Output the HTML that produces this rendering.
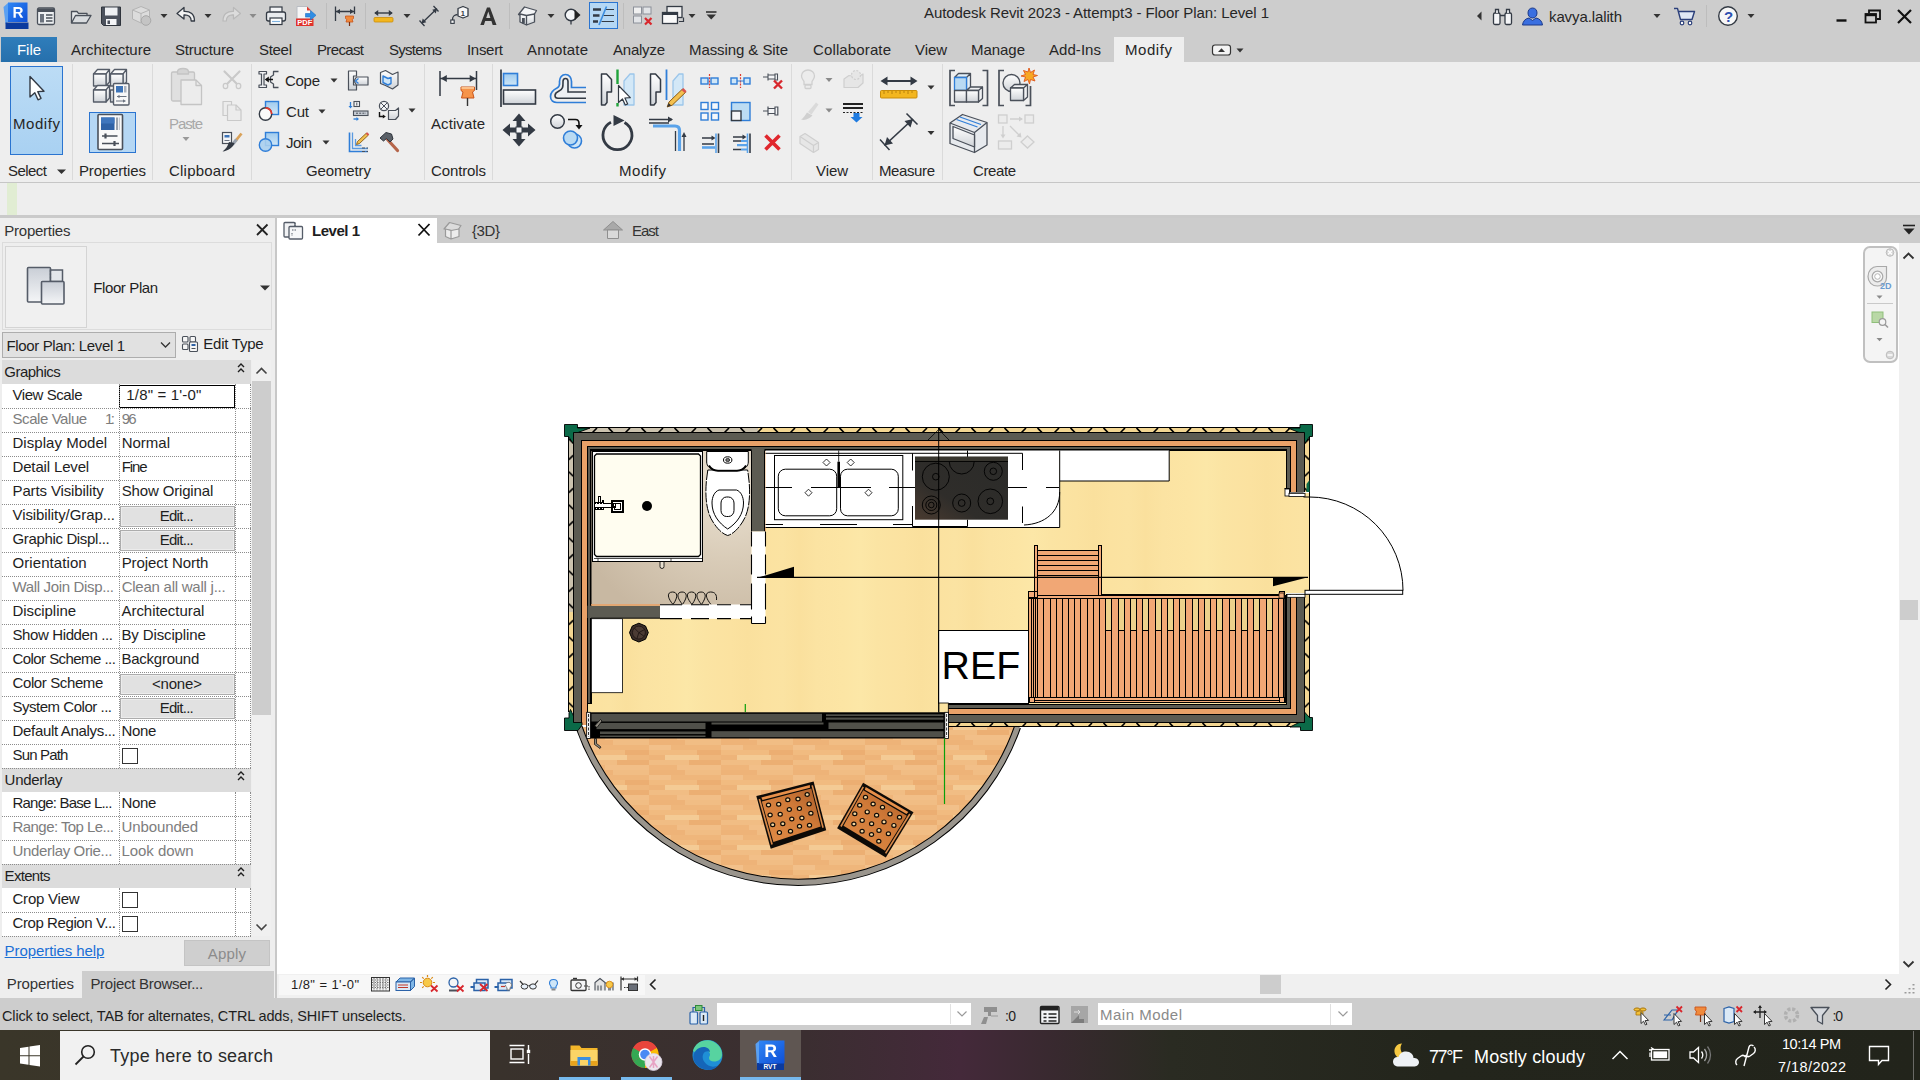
<!DOCTYPE html>
<html><head><meta charset="utf-8"><title>Autodesk Revit 2023</title>
<style>
html,body{margin:0;padding:0;}
body{width:1920px;height:1080px;overflow:hidden;position:relative;background:#fff;font-family:"Liberation Sans",sans-serif;}
.a{position:absolute;box-sizing:border-box;}
.t{position:absolute;white-space:nowrap;line-height:1;font-family:"Liberation Sans",sans-serif;}
svg{position:absolute;left:0;top:0;overflow:visible;}

</style></head>
<body>
<!-- ===== title bar + ribbon tabs ===== -->
<div class="a" style="left:0;top:0;width:1920px;height:62px;background:#cdcdcd"></div>
<div class="a" style="left:1px;top:37px;width:56px;height:25px;background:linear-gradient(#2f7dbb,#2670ac)"></div>
<div class="a" style="left:1114px;top:37px;width:70px;height:26px;background:#eeeeee"></div>
<!-- ===== ribbon body ===== -->
<div class="a" style="left:0;top:62px;width:1920px;height:121px;background:#eeeeee"></div>
<div class="a" style="left:0;top:182px;width:1920px;height:1px;background:#c6c6c6"></div>
<!-- panel separators -->
<div class="a" style="left:72px;top:64px;width:1px;height:116px;background:#dadada"></div>
<div class="a" style="left:152px;top:64px;width:1px;height:116px;background:#dadada"></div>
<div class="a" style="left:251px;top:64px;width:1px;height:116px;background:#dadada"></div>
<div class="a" style="left:424px;top:64px;width:1px;height:116px;background:#dadada"></div>
<div class="a" style="left:492px;top:64px;width:1px;height:116px;background:#dadada"></div>
<div class="a" style="left:791px;top:64px;width:1px;height:116px;background:#dadada"></div>
<div class="a" style="left:872px;top:64px;width:1px;height:116px;background:#dadada"></div>
<div class="a" style="left:942px;top:64px;width:1px;height:116px;background:#dadada"></div>
<!-- Modify big button + properties button -->
<div class="a" style="left:10px;top:66px;width:53px;height:89px;background:linear-gradient(#bcdcf5,#a9d1f2);border:1px solid #2a74d0"></div>
<div class="a" style="left:89px;top:112px;width:47px;height:41px;background:#b5d7f4;border:1px solid #2a74d0"></div>
<!-- QAT active toggle -->
<div class="a" style="left:589px;top:2px;width:29px;height:27px;background:#b5d7f4;border:1px solid #2a74d0"></div>
<!-- ===== options bar ===== -->
<div class="a" style="left:0;top:183px;width:1920px;height:33px;background:#eeeeee"></div>
<div class="a" style="left:7px;top:183px;width:10px;height:32px;background:#e1edd3"></div>
<div class="a" style="left:0;top:215px;width:1920px;height:3px;background:#cacaca"></div>
<!-- ===== properties palette ===== -->
<div class="a" style="left:0;top:218px;width:275px;height:780px;background:#eeeeee"></div>
<div class="a" style="left:275px;top:218px;width:2px;height:780px;background:#c8c8c8"></div>
<div class="a" style="left:2px;top:242px;width:270px;height:88px;border:1px solid #dcdcdc;background:#eeeeee"></div>
<div class="a" style="left:5px;top:246px;width:82px;height:82px;border:1px solid #d4d4d4;background:#f0f0f0"></div>
<div class="a" style="left:2px;top:332px;width:174px;height:26px;border:1px solid #adadad;background:#e1e1e1"></div>
<!-- table -->
<div class="a" style="left:2px;top:360px;width:249px;height:576px;background:#fff"></div>
<div class="a" style="left:2px;top:360px;width:249px;height:24px;background:#dcdcdc"></div>
<div class="a" style="left:2px;top:768px;width:249px;height:24px;background:#dcdcdc"></div>
<div class="a" style="left:2px;top:864px;width:249px;height:24px;background:#dcdcdc"></div>
<!-- scrollbar -->
<div class="a" style="left:252px;top:360px;width:19px;height:576px;background:#f0f0f0"></div>
<div class="a" style="left:252px;top:381px;width:19px;height:334px;background:#cdcdcd"></div>
<!-- apply -->
<div class="a" style="left:184px;top:940px;width:86px;height:26px;background:#cfcfcf;border:1px solid #c4c4c4"></div>
<!-- bottom tabs -->
<div class="a" style="left:0;top:971px;width:274px;height:27px;background:#cdcdcd"></div>
<div class="a" style="left:0;top:971px;width:82px;height:27px;background:#eeeeee"></div>
<!-- ===== view tabs ===== -->
<div class="a" style="left:277px;top:218px;width:1643px;height:25px;background:#cccccc"></div>
<div class="a" style="left:277px;top:218px;width:160px;height:25px;background:#ffffff"></div>
<!-- canvas right scrollbar -->
<div class="a" style="left:1899px;top:243px;width:21px;height:731px;background:#f0f0f0"></div>
<div class="a" style="left:1900px;top:600px;width:18px;height:20px;background:#cdcdcd"></div>
<!-- nav bar -->
<div class="a" style="left:1862.500px;top:245.500px;width:35.500px;height:117px;border:2px solid #c0c0c0;border-radius:7px;background:#f4f4f4"></div>
<!-- view control bar / h scrollbar -->
<div class="a" style="left:277px;top:974px;width:1643px;height:24px;background:#f0f0f0"></div>
<div class="a" style="left:279px;top:975px;width:366px;height:20px;background:#f7f7f7"></div>
<div class="a" style="left:1260px;top:975px;width:21px;height:19px;background:#cdcdcd"></div>
<!-- ===== status bar ===== -->
<div class="a" style="left:0;top:998px;width:1920px;height:33px;background:#cdcdcd"></div>
<div class="a" style="left:717px;top:1003px;width:254px;height:22px;background:#fff"></div>
<div class="a" style="left:1098px;top:1003px;width:254px;height:22px;background:#fff"></div>
<!-- ===== taskbar ===== -->
<div class="a" style="left:0;top:1030px;width:1920px;height:50px;background:linear-gradient(90deg,#3a3629 0%,#39322c 26%,#3b2e31 42%,#44293a 50%,#38292f 55%,#2a2b22 61%,#23251c 75%,#22241b 100%)"></div>
<div class="a" style="left:60px;top:1031px;width:430px;height:49px;background:#f1f1f1"></div>
<div class="a" style="left:740px;top:1030px;width:61px;height:50px;background:#5f5652"></div>
<div class="a" style="left:1913px;top:1031px;width:1px;height:49px;background:#6a6a66"></div>
<div class="a" style="left:559px;top:1077px;width:51px;height:3px;background:#76b9ed"></div>
<div class="a" style="left:621px;top:1077px;width:51px;height:3px;background:#76b9ed"></div>
<div class="a" style="left:740px;top:1077px;width:61px;height:3px;background:#76b9ed"></div>

<!-- properties rows -->
<svg width="1920" height="1080"><path d="M238 367.0l3-3 3 3M238 372.0l3-3 3 3" stroke="#1e1e1e" stroke-width="1.4" fill="none"/></svg>
<div class="a" style="left:119px;top:384.5px;width:116px;height:23px;border:1.5px solid #000;background:#fff"></div>
<div class="a" style="left:2px;top:407.5px;width:249px;height:0;border-top:1px dotted #8c8c8c"></div>
<div class="a" style="left:2px;top:431.5px;width:249px;height:0;border-top:1px dotted #8c8c8c"></div>
<div class="a" style="left:2px;top:455.5px;width:249px;height:0;border-top:1px dotted #8c8c8c"></div>
<div class="a" style="left:2px;top:479.5px;width:249px;height:0;border-top:1px dotted #8c8c8c"></div>
<div class="a" style="left:2px;top:503.5px;width:249px;height:0;border-top:1px dotted #8c8c8c"></div>
<div class="a" style="left:120px;top:505.5px;width:115px;height:21.500px;border:1px solid #adadad;background:#e1e1e1;box-shadow:inset 0 0 0 1px #ececec"></div>
<div class="a" style="left:2px;top:527.5px;width:249px;height:0;border-top:1px dotted #8c8c8c"></div>
<div class="a" style="left:120px;top:529.5px;width:115px;height:21.500px;border:1px solid #adadad;background:#e1e1e1;box-shadow:inset 0 0 0 1px #ececec"></div>
<div class="a" style="left:2px;top:551.5px;width:249px;height:0;border-top:1px dotted #8c8c8c"></div>
<div class="a" style="left:2px;top:575.5px;width:249px;height:0;border-top:1px dotted #8c8c8c"></div>
<div class="a" style="left:2px;top:599.5px;width:249px;height:0;border-top:1px dotted #8c8c8c"></div>
<div class="a" style="left:2px;top:623.5px;width:249px;height:0;border-top:1px dotted #8c8c8c"></div>
<div class="a" style="left:2px;top:647.5px;width:249px;height:0;border-top:1px dotted #8c8c8c"></div>
<div class="a" style="left:2px;top:671.5px;width:249px;height:0;border-top:1px dotted #8c8c8c"></div>
<div class="a" style="left:120px;top:673.5px;width:115px;height:21.500px;border:1px solid #adadad;background:#e1e1e1;box-shadow:inset 0 0 0 1px #ececec"></div>
<div class="a" style="left:2px;top:695.5px;width:249px;height:0;border-top:1px dotted #8c8c8c"></div>
<div class="a" style="left:120px;top:697.5px;width:115px;height:21.500px;border:1px solid #adadad;background:#e1e1e1;box-shadow:inset 0 0 0 1px #ececec"></div>
<div class="a" style="left:2px;top:719.5px;width:249px;height:0;border-top:1px dotted #8c8c8c"></div>
<div class="a" style="left:2px;top:743.5px;width:249px;height:0;border-top:1px dotted #8c8c8c"></div>
<div class="a" style="left:122px;top:747.5px;width:16px;height:16px;border:1px solid #333;background:#fff"></div>
<div class="a" style="left:2px;top:767.5px;width:249px;height:0;border-top:1px dotted #8c8c8c"></div>
<svg width="1920" height="1080"><path d="M238 775.0l3-3 3 3M238 780.0l3-3 3 3" stroke="#1e1e1e" stroke-width="1.4" fill="none"/></svg>
<div class="a" style="left:2px;top:815.5px;width:249px;height:0;border-top:1px dotted #8c8c8c"></div>
<div class="a" style="left:2px;top:839.5px;width:249px;height:0;border-top:1px dotted #8c8c8c"></div>
<div class="a" style="left:2px;top:863.5px;width:249px;height:0;border-top:1px dotted #8c8c8c"></div>
<svg width="1920" height="1080"><path d="M238 871.0l3-3 3 3M238 876.0l3-3 3 3" stroke="#1e1e1e" stroke-width="1.4" fill="none"/></svg>
<div class="a" style="left:122px;top:891.5px;width:16px;height:16px;border:1px solid #333;background:#fff"></div>
<div class="a" style="left:2px;top:911.5px;width:249px;height:0;border-top:1px dotted #8c8c8c"></div>
<div class="a" style="left:122px;top:915.5px;width:16px;height:16px;border:1px solid #333;background:#fff"></div>
<div class="a" style="left:2px;top:935.5px;width:249px;height:0;border-top:1px dotted #8c8c8c"></div>
<div class="a" style="left:118.5px;top:384px;width:0;height:384px;border-left:1px dotted #8c8c8c"></div>
<div class="a" style="left:235px;top:384px;width:0;height:384px;border-left:1px dotted #8c8c8c"></div>
<div class="a" style="left:249.600px;top:384px;width:0;height:384px;border-left:1px dotted #8c8c8c"></div>
<div class="a" style="left:118.5px;top:792px;width:0;height:72px;border-left:1px dotted #8c8c8c"></div>
<div class="a" style="left:235px;top:792px;width:0;height:72px;border-left:1px dotted #8c8c8c"></div>
<div class="a" style="left:249.600px;top:792px;width:0;height:72px;border-left:1px dotted #8c8c8c"></div>
<div class="a" style="left:118.5px;top:888px;width:0;height:48px;border-left:1px dotted #8c8c8c"></div>
<div class="a" style="left:235px;top:888px;width:0;height:48px;border-left:1px dotted #8c8c8c"></div>
<div class="a" style="left:249.600px;top:888px;width:0;height:48px;border-left:1px dotted #8c8c8c"></div>

<svg width="1920" height="1080" viewBox="0 0 1920 1080">
<defs>
 <linearGradient id="gGy" x1="0" x2="0" y1="0" y2="1"><stop offset="0" stop-color="#ffffff"/><stop offset="1" stop-color="#cfd3d8"/></linearGradient>
 <linearGradient id="gGy2" x1="0" x2="0" y1="0" y2="1"><stop offset="0" stop-color="#c9ced6"/><stop offset="1" stop-color="#f4f5f7"/></linearGradient>
 <linearGradient id="gBl" x1="0" x2="0" y1="0" y2="1"><stop offset="0" stop-color="#9fcbee"/><stop offset="1" stop-color="#cfe6f7"/></linearGradient>
 <linearGradient id="gRv" x1="0" x2="1" y1="0" y2="1"><stop offset="0" stop-color="#2f86f5"/><stop offset="1" stop-color="#0e4fd6"/></linearGradient>
</defs>
<!-- ================= QAT ================= -->
<!-- Revit logo -->
<path d="M3.500 7L8.500 2.500V21.500L5.500 24Z" fill="#5aa0f2"/>
<path d="M5.500 22.500H28.500V29H5.500Z" fill="#0b3a9e"/>
<path d="M8 2.500H27.500V22H8Z" fill="url(#gRv)"/>
<path d="M13.500 7h5.200c2.600 0 4 1.300 4 3.300c0 1.600-.9 2.600-2.300 3l2.900 4.500h-2.700l-2.500-4.200h-2.300v4.200h-2.300z M15.800 9v3h2.700c1.200 0 1.800-.5 1.800-1.500s-.6-1.500-1.800-1.500z" fill="#fff" fill-rule="evenodd"/>
<!-- start page -->
<rect x="37.500" y="8" width="17" height="16.500" rx="1.500" fill="#eef0f2" stroke="#4a505a" stroke-width="1.300"/>
<rect x="38" y="8.500" width="16" height="3.500" fill="#4a505a"/>
<rect x="40" y="14" width="4" height="8.500" fill="#6b727d"/>
<path d="M46 15h6.500M46 18h6.500M46 21h6.500" stroke="#4a505a" stroke-width="1.300"/>
<!-- open -->
<path d="M71.500 23V11.500h5.500l1.500 1.800h8.500V15.500" fill="#e6e8ea" stroke="#4a505a" stroke-width="1.300" stroke-linejoin="round"/>
<path d="M71.500 23L75.500 15.500H91L86.500 23Z" fill="#d9dcdf" stroke="#4a505a" stroke-width="1.300" stroke-linejoin="round"/>
<!-- save -->
<path d="M101.500 7H120.500V25.500H103.500L101.500 23.500Z" fill="#4b515c" stroke="#2f343c" stroke-width="1"/>
<rect x="105" y="7.500" width="12.500" height="8" fill="#eef0f3"/>
<rect x="106" y="19" width="10.500" height="6" fill="#f4f5f7"/><rect x="107.500" y="20.500" width="2.500" height="3.500" fill="#4b515c"/>
<!-- sync (disabled) -->
<g fill="#dcdcdc" stroke="#b4b4b4" stroke-width="1" stroke-linejoin="round">
 <path d="M141 6.500l8.500 3.500v9l-8.500 4-8.500-4v-9z"/><path d="M132.500 10l8.500 3.500 8.500-3.500M141 13.500V23" fill="none"/>
 <circle cx="146" cy="20.500" r="4.800" fill="#c4c4c4" stroke="#a8a8a8"/>
</g>
<path d="M160.500 14h7l-3.500 4z" fill="#333"/>
<!-- undo -->
<path d="M177 13.500l7-6v3.800c6.500-.3 10.500 3 10.500 9.700h-3.300c0-4.200-2.700-6.400-7.200-6.200V19Z" fill="#f2f2f2" stroke="#333a44" stroke-width="1.300" stroke-linejoin="round"/>
<path d="M204.500 14h7l-3.500 4z" fill="#333"/>
<!-- redo disabled -->
<path d="M240.500 13.500l-7-6v3.800c-6.500-.3-10.500 3-10.500 9.700h3.300c0-4.200 2.700-6.400 7.200-6.200V19Z" fill="#dcdcdc" stroke="#b9b9b9" stroke-width="1.200" stroke-linejoin="round"/>
<path d="M249.500 14h7l-3.500 4z" fill="#8a8a8a"/>
<!-- print -->
<rect x="270" y="7" width="12" height="6" fill="#f4f5f7" stroke="#333a44" stroke-width="1.200"/>
<rect x="266.500" y="12" width="19" height="9" rx="2" fill="#e9ebee" stroke="#333a44" stroke-width="1.300"/>
<rect x="270" y="18" width="12" height="6.500" fill="#fff" stroke="#333a44" stroke-width="1.200"/>
<path d="M272 21.500h8" stroke="#7fb2e0" stroke-width="1.200"/>
<!-- pdf -->
<path d="M297 6.500h10l4 4V19H297Z" fill="#f6f6f6" stroke="#b9bdc3" stroke-width="1"/>
<path d="M307 6.500l4 4h-4z" fill="#e03c31"/>
<rect x="296" y="18.500" width="17.500" height="7.500" fill="#e0322b"/>
<text x="297.300" y="25" font-family="Liberation Sans, sans-serif" font-size="6.800" font-weight="700" fill="#fff" textLength="15" lengthAdjust="spacingAndGlyphs">PDF</text>
<path d="M305.500 13.500h5v-3l5.500 4.800-5.500 4.800v-3h-5z" fill="#2f8de4" stroke="#1b6fc4" stroke-width=".6"/>
<!-- separators -->
<path d="M326.500 3V29M365.500 3V29M509.500 3V29M623.500 3V29" stroke="#bdbdbd" stroke-width="1"/>
<!-- aligned dim + pin -->
<path d="M335.500 6.500V21M354.500 6.500V14M335.500 11.500H354.500" stroke="#333a44" stroke-width="1.300" fill="none"/>
<path d="M336 11.500l4-2.500v5zM354 11.500l-4-2.500v5z" fill="#333a44"/>
<path d="M345.500 16h8v2.500l-1.300 1 .8 2.500h-7l.8-2.500-1.300-1z" fill="#f08a3c" stroke="#c9541a" stroke-width=".8"/><path d="M349.500 22v4" stroke="#7a3010" stroke-width="1.200"/>
<!-- measure -->
<path d="M375 13h17" stroke="#333a44" stroke-width="1.400"/><path d="M374.200 13l4-3v6zM392.800 13l-4-3v6z" fill="#333a44"/>
<rect x="374" y="17.500" width="19" height="4.500" rx="1" fill="#f3b61f" stroke="#c98d0a" stroke-width=".8"/>
<path d="M403.500 14h7l-3.500 4z" fill="#333"/>
<!-- aligned dim diag -->
<path d="M421.500 23.500L437 8.500M419.500 20.500l5 5.500M433.500 6l5 5.500" stroke="#333a44" stroke-width="1.300" fill="none"/>
<path d="M421.500 23.500l1.200-5 3.600 3.800zM437 8.500l-1.200 5-3.600-3.800z" fill="#333a44"/>
<!-- tag -->
<path d="M458 8.500l5-2 5 2v7.500l-5 2-5-2z" fill="#f7f7f7" stroke="#333a44" stroke-width="1.300" stroke-linejoin="round"/>
<text x="460.800" y="15.500" font-family="Liberation Sans, sans-serif" font-size="7.500" font-weight="700" fill="#333a44">1</text>
<path d="M457.500 14.500c-4 .5-5 2-5 5.500" fill="none" stroke="#333a44" stroke-width="1.300"/><rect x="450.800" y="20" width="3.400" height="3.400" fill="#f7f7f7" stroke="#333a44" stroke-width="1.100"/>
<!-- text A -->
<path d="M480.300 25L487 7.500h3L496.500 25h-3.800l-1.300-4h-6.200l-1.300 4z M486.200 18h4.200l-2.100-6.600z" fill="#333" fill-rule="evenodd"/>
<!-- 3D house -->
<path d="M518.500 14.500l6-7.500 12 3.500-4 7z" fill="#f4f5f7" stroke="#4a505a" stroke-width="1.300" stroke-linejoin="round"/>
<path d="M520 14v8l6.500 3v-9.500zM526.500 15.500l8-1.500v8l-8 3z" fill="url(#gGy)" stroke="#4a505a" stroke-width="1.300" stroke-linejoin="round"/>
<rect x="522" y="18" width="2.800" height="5.500" fill="#4a505a"/>
<path d="M547.500 14h7l-3.500 4z" fill="#333"/>
<!-- section -->
<circle cx="571" cy="15" r="5.800" fill="#f4f5f7" stroke="#333a44" stroke-width="1.400"/>
<path d="M574.500 9.500l6 5.500-6 5.500z" fill="#222"/><path d="M571 21v3.500" stroke="#333a44" stroke-width="1.300"/>
<!-- thin lines (active) -->
<path d="M593 9.500h8M593 15.500h6.500M593 21.500h5" stroke="#333a44" stroke-width="2.600"/>
<path d="M605 9.500h9M603.500 15.500h10.500M601.500 21.500h12.500" stroke="#333a44" stroke-width="1"/>
<path d="M606.500 6.500L599 25" stroke="#3b8de0" stroke-width="1.600"/>
<!-- close hidden -->
<rect x="633.500" y="7" width="8" height="7" fill="#f0f0f0" stroke="#8b9099" stroke-width="1"/><rect x="643" y="7" width="8" height="7" fill="#e2e4e7" stroke="#8b9099" stroke-width="1"/>
<rect x="633.500" y="16" width="8" height="7" fill="#e2e4e7" stroke="#8b9099" stroke-width="1"/>
<path d="M645 18l6.500 6.500M651.500 18l-6.500 6.500" stroke="#d8272d" stroke-width="2.200"/>
<!-- switch windows -->
<rect x="667" y="6.500" width="15" height="11" fill="#f0f0f0" stroke="#333a44" stroke-width="1.300"/>
<rect x="662.500" y="12.500" width="15" height="11" fill="#fafafa" stroke="#333a44" stroke-width="1.300"/><rect x="662.500" y="12.500" width="15" height="2.500" fill="#333a44"/>
<path d="M679 21.500h4.500v-4" fill="none" stroke="#333a44" stroke-width="1.200"/>
<path d="M688.500 14h7l-3.500 4z" fill="#333"/>
<path d="M706 12h10.500" stroke="#333" stroke-width="1.600"/><path d="M706.500 14.500h9.500l-4.750 5z" fill="#333"/>

<!-- ================= RIBBON ICONS ================= -->
<!-- Modify cursor -->
<path d="M30 76.500V97l4.800-4.200 3.200 7 3-1.400-3.200-6.800 6.200-.4z" fill="#fff" stroke="#333a44" stroke-width="1.400" stroke-linejoin="round"/>
<path d="M57 169.500h9l-4.500 4.500z" fill="#333"/>
<!-- Type properties: 4 cubes + sheet -->
<g fill="url(#gGy)" stroke="#555c68" stroke-width="1.300" stroke-linejoin="round">
 <path d="M93.500 74l4-4.500h12l-3.500 4.500zM106 74l3.500-4.500V82L106 86z"/><rect x="93.500" y="74" width="12.500" height="12"/>
 <path d="M110.500 74l4-4.500h12l-3.500 4.500zM123 74l3.500-4.500V82L123 86z"/><rect x="110.500" y="74" width="12.500" height="12"/>
 <path d="M93.500 90l4-4.500h12l-3.500 4.500zM106 90l3.500-4.500V98l-3.500 4z"/><rect x="93.500" y="90" width="12.500" height="12"/>
 <rect x="110.500" y="90" width="6" height="12"/>
</g>
<rect x="113.500" y="83.500" width="15.500" height="21.500" rx="1" fill="#f8f8f8" stroke="#555c68" stroke-width="1.400"/>
<rect x="116" y="86" width="7" height="6.500" fill="#3d74b8"/><rect x="124" y="86" width="2.500" height="6.500" fill="#aab2bd"/>
<path d="M117 96.500h9.500M116 101h9.500" stroke="#6b7380" stroke-width="1.100"/><path d="M117 96.500l2.500-1.800v3.600zM125.500 101l-2.500-1.800v3.600z" fill="#6b7380"/>
<!-- Properties sheet -->
<rect x="98" y="114.500" width="24.500" height="35" rx="1" fill="#f9f9f9" stroke="#4a505a" stroke-width="1.600"/>
<rect x="101" y="117.500" width="13.500" height="12.500" fill="#2f62a6"/><rect x="101" y="117.500" width="13.500" height="6" fill="#3f76bd"/>
<rect x="116" y="117.500" width="2" height="12.500" fill="#9aa2ad"/><rect x="118.800" y="117.500" width="1.200" height="12.500" fill="#c3c8cf"/>
<path d="M102 136h15.500M102 143.500h17" stroke="#4a505a" stroke-width="1.300"/><path d="M105.500 133.500v5M114.500 141v5" stroke="#4a505a" stroke-width="2.200"/>
<!-- Paste (disabled) -->
<g fill="#e0e0e0" stroke="#c4c4c4" stroke-width="1.300" stroke-linejoin="round">
 <rect x="171.500" y="72" width="23" height="29" rx="1.500"/><path d="M177.500 72c0-2 1.500-3.500 5.500-3.500s5.500 1.500 5.500 3.500v2h-11z" fill="#d4d4d4"/>
 <path d="M181 80h15l5.500 5.500V104.500H181z" fill="#ececec"/><path d="M196 80v5.500h5.500" fill="none"/>
</g>
<path d="M182.500 137h7l-3.500 4z" fill="#999"/>
<!-- cut disabled -->
<g stroke="#c9c9c9" stroke-width="2.200" fill="none" stroke-linecap="round"><path d="M224.500 71.500l13 13M239.500 71.500l-13 13"/></g>
<g fill="#ececec" stroke="#c9c9c9" stroke-width="1.200"><ellipse cx="225.500" cy="86" rx="2.300" ry="2.600"/><ellipse cx="238.500" cy="86" rx="2.300" ry="2.600"/></g>
<!-- copy disabled -->
<g fill="#ececec" stroke="#c9c9c9" stroke-width="1.200" stroke-linejoin="round"><path d="M223 101.500h8.500v14H223z"/><path d="M227.500 105h8.500l5 5v10.500h-13.500z"/><path d="M236 105v5h5" fill="none"/></g>
<!-- match type brush -->
<rect x="222.500" y="132.500" width="9" height="11" fill="#f4f5f7" stroke="#4a505a" stroke-width="1.200"/><rect x="224.500" y="135" width="5" height="2.500" fill="#3d74b8"/><path d="M224.500 140.500h5" stroke="#6b7380" stroke-width="1"/>
<path d="M241.500 133.500l-6 7.500" stroke="#d9a25a" stroke-width="2.800"/><path d="M236.500 139.500l-4 5" stroke="#9aa2ad" stroke-width="3.200"/>
<path d="M234.500 143c-1.500 4.500-6.500 8-12 8.500 3.500-2.500 5-5 6.500-9.500z" fill="#333a44"/>
<!-- Cope -->
<path d="M259 71.500h7.500v2.500h-2.500V85h2.500v2.500H259V85h2.500V74H259z" fill="#f0f1f3" stroke="#4a505a" stroke-width="1.200" stroke-linejoin="round"/>
<path d="M278.500 71.500h-5v3.500l-3 2v5l3 2v3.500h5" fill="none" stroke="#4a505a" stroke-width="1.300" stroke-linejoin="round"/>
<path d="M273 79.500h-7" stroke="#111" stroke-width="1.500"/><path d="M264.800 79.500l4-3v6z" fill="#111"/>
<path d="M330.500 78.500h7l-3.500 4z" fill="#333"/>
<!-- Cut -->
<rect x="265.500" y="101.500" width="13" height="13" fill="url(#gBl)" stroke="#2f7ed8" stroke-width="1.400"/>
<circle cx="265.500" cy="114" r="6.200" fill="#fafafa" stroke="#333a44" stroke-width="1.400"/>
<path d="M265.500 107.800a6.200 6.200 0 0 1 6.200 6.200" fill="none" stroke="#e63a2e" stroke-width="1.800"/>
<path d="M318.500 109.500h7l-3.500 4z" fill="#333"/>
<!-- Join -->
<rect x="265.500" y="132.500" width="13" height="13" fill="url(#gBl)" stroke="#2f7ed8" stroke-width="1.400"/>
<circle cx="265.500" cy="145" r="6.200" fill="#a8cfee" fill-opacity=".9" stroke="#2f7ed8" stroke-width="1.400"/>
<path d="M322.500 140.500h7l-3.500 4z" fill="#333"/>
<!-- wall joins -->
<path d="M348.500 71h8v5h-3v9h3v5h-8z" fill="url(#gGy)" stroke="#4a505a" stroke-width="1.200" stroke-linejoin="round"/>
<path d="M356.500 77h11.500v8h-11.500l-2.500-4z" fill="url(#gGy)" stroke="#4a505a" stroke-width="1.200" stroke-linejoin="round"/>
<path d="M358.500 78.500l-3 2.500 3 2.500" fill="none" stroke="#2f7ed8" stroke-width="1.300"/>
<!-- split face -->
<path d="M380.500 72.500l5-2 7 4 5.500-2.500v13l-5.500 4-7-3.500-5-2z" fill="url(#gGy)" stroke="#4a505a" stroke-width="1.200" stroke-linejoin="round"/>
<path d="M383 76l5 2.500 3-1v6l-3 1.500-5-2.500z" fill="#cfe6f7" stroke="#2f7ed8" stroke-width="1.400" stroke-linejoin="round"/>
<!-- beam/column joins -->
<path d="M350.500 102v5" stroke="#2f7ed8" stroke-width="1.300"/><path d="M348.500 106l2 2.500 2-2.500z" fill="#2f7ed8"/>
<rect x="354" y="101.500" width="5.500" height="5" fill="#f4f5f7" stroke="#4a505a" stroke-width="1.100"/><path d="M356.800 102.500v3" stroke="#4a505a"/>
<rect x="353.500" y="111" width="14.500" height="4.500" fill="#c9ced6" stroke="#4a505a" stroke-width="1.100"/><path d="M356 113.200h10" stroke="#4a505a" stroke-width="1" stroke-dasharray="2 1.200"/>
<path d="M353.500 119h4" stroke="#2f7ed8" stroke-width="1.400"/><path d="M356.500 117l2.500 2-2.500 2z" fill="#2f7ed8"/>
<!-- uncut -->
<circle cx="384" cy="106" r="4.600" fill="#f4f5f7" stroke="#4a505a" stroke-width="1.200"/><path d="M381 103l6 6M387 103l-6 6" stroke="#4a505a" stroke-width="1"/>
<path d="M388.500 110.500h7l3-2.500v8l-3 3.500h-7z" fill="url(#gGy)" stroke="#4a505a" stroke-width="1.200" stroke-linejoin="round"/>
<path d="M379.500 112v4.500h4" fill="none" stroke="#111" stroke-width="1.400"/><path d="M382.800 114.500l3 2-3 2z" fill="#111"/>
<path d="M408.500 108.500h7l-3.500 4z" fill="#333"/>
<!-- paint/edit -->
<path d="M349.500 132.500v19h18.500" fill="none" stroke="#2f7ed8" stroke-width="1.600"/><path d="M352.500 132.500v16h15.500M355.500 139v6.500h6" fill="none" stroke="#5a9ae0" stroke-width="1.300"/>
<path d="M362 148h6M362 151.500h6" stroke="#4a505a" stroke-width="1.200" stroke-dasharray="3 1.500"/>
<path d="M366.500 133l-9 8.500-1 3 3-1 9-8.500z" fill="#f1c04f" stroke="#8a5a14" stroke-width=".9" stroke-linejoin="round"/><path d="M366.500 133l2 2" stroke="#d9534f" stroke-width="2"/>
<!-- demolish hammer -->
<path d="M387.500 139.500l10 11" stroke="#b5654a" stroke-width="3.200" stroke-linecap="round"/>
<path d="M380 138l6-5.500 5.500 1.500 1.500 5-3 3-3.500-3.500-3 2.500z" fill="#5a6068" stroke="#2f343c" stroke-width="1" stroke-linejoin="round"/>
<!-- Activate -->
<path d="M440 71V96M476.500 71V90M440 78.500H476.500" stroke="#333a44" stroke-width="1.500" fill="none"/>
<path d="M440.800 78.500l6-3.500v7zM475.700 78.500l-6-3.500v7z" fill="#333a44"/>
<path d="M461 87h13.500v3.500l-2 1.500 1.500 6h-12.500l1.500-6-2-1.500z" fill="#f6944a" stroke="#c9541a" stroke-width="1"/><path d="M461.500 87h12.500v2h-12.500z" fill="#fbc08a"/><path d="M467.500 98v8" stroke="#333" stroke-width="1.400"/>
<!-- Align -->
<path d="M501 69.500V107" stroke="#333a44" stroke-width="1.700"/>
<rect x="503.500" y="73.500" width="14" height="12" fill="url(#gBl)" stroke="#2f7ed8" stroke-width="1.600"/>
<rect x="503.500" y="90" width="32" height="14" fill="url(#gGy)" stroke="#333a44" stroke-width="1.600"/>
<!-- Move -->
<path d="M519 113.500l6.500 7.500h-4v6.500h6.500v-4l7.500 6.500-7.500 6.500v-4h-6.500v6.500h4l-6.500 7.500-6.500-7.500h4v-6.500h-6.500v4l-7.500-6.500 7.500-6.500v4h6.500v-6.500h-4z" fill="#333a44"/>
<rect x="516" y="127" width="6" height="6" fill="#f4f5f7" stroke="#333a44" stroke-width="1"/>
<!-- Offset -->
<path d="M586 87.500h-14.500v-6c0-4-2.500-7-6-7s-6 3-6 7c0 3 1 4.500-2.500 6.500-4 2-6.500 4.500-6.500 8.500s3 6 6.500 6h29" fill="none" stroke="#2f7ed8" stroke-width="1.700"/>
<path d="M586 92h-18v-10.500c0-1.800-1-3-2.500-3s-2.500 1.200-2.500 3c0 4 .5 7.500-4 9.500-2.500 1.200-4 2.500-4 4.500 0 1.800 1.300 2.800 3 2.800h28" fill="#eef0f3" stroke="#333a44" stroke-width="1.600"/>
<!-- Copy -->
<circle cx="557.500" cy="121.500" r="6.800" fill="url(#gGy)" stroke="#333a44" stroke-width="1.500"/>
<path d="M568 119.500h7.500c2.500 0 3.500 1.500 3.500 4v2" fill="none" stroke="#111" stroke-width="1.600"/><path d="M575.500 125l3.500 4.500 3.500-4.500z" fill="#111"/>
<circle cx="574.500" cy="141" r="7" fill="#cfe6f7" stroke="#2f7ed8" stroke-width="1.600"/><circle cx="570.500" cy="138" r="7" fill="#b9daf3" stroke="#2f7ed8" stroke-width="1.600"/>
<!-- Mirror pick axis -->
<path d="M601.500 74h5l5 5.500v12.500h-4.500v10.500l-2 2.500h-3.500z" fill="url(#gGy)" stroke="#333a44" stroke-width="1.500" stroke-linejoin="round"/>
<path d="M634 74h-4l-6 7v24h10z" fill="#d3e8f7" stroke="#9cc6ea" stroke-width="1.300" stroke-linejoin="round"/>
<path d="M617.500 69.500V84" stroke="#1fa33a" stroke-width="2.400"/><path d="M617.500 103v3.500" stroke="#1fa33a" stroke-width="2.400"/>
<path d="M618.500 85.500v17l4-3.500 2.800 6 2.400-1.100-2.800-5.900 5.400-.3z" fill="#fff" stroke="#333a44" stroke-width="1.200" stroke-linejoin="round"/>
<!-- Rotate -->
<path d="M624.500 122.500a14.500 14.500 0 1 1-13.500-.3" fill="none" stroke="#333a44" stroke-width="2.800"/>
<path d="M613.500 115l11 5.500-11 5.500z" fill="#333a44"/>
<!-- Mirror draw axis -->
<path d="M650.500 74h5l5 5.500v12.500h-4.500v10.500l-2 2.500h-3.500z" fill="url(#gGy)" stroke="#333a44" stroke-width="1.500" stroke-linejoin="round"/>
<path d="M683 74h-4l-6 7v24h10z" fill="#d3e8f7" stroke="#9cc6ea" stroke-width="1.300" stroke-linejoin="round"/>
<path d="M666.500 69.500V100" stroke="#2f7ed8" stroke-width="1.800"/>
<path d="M682.500 89l-13.500 13-1.800 5 5-1.800 13.500-13z" fill="#f3c04f" stroke="#8a5a14" stroke-width="1" stroke-linejoin="round"/><path d="M682.500 89l3.200 3.200" stroke="#d9534f" stroke-width="2.600"/><path d="M667.200 107l1.500-4 2.500 2.500z" fill="#333"/>
<!-- Trim/extend corner -->
<path d="M649 119.500h23M649 123h20" stroke="#333a44" stroke-width="1.300"/><path d="M668 116.500l5 3-5 3z" fill="#333a44"/>
<path d="M653 126h22c3 0 4.500 1.500 4.500 4.500V151" fill="none" stroke="#5aa3ea" stroke-width="3.200"/>
<path d="M675.500 131v20M684 136v15" stroke="#333a44" stroke-width="1.300"/><path d="M681.500 137l2.500-5 2.500 5z" fill="#333a44"/>
<!-- split element -->
<rect x="701" y="78" width="7" height="6" fill="#cfe6f7" stroke="#2f7ed8" stroke-width="1.400"/><rect x="711" y="78" width="7" height="6" fill="#cfe6f7" stroke="#2f7ed8" stroke-width="1.400"/>
<path d="M709.500 74v14" stroke="#e03c31" stroke-width="1.200" stroke-dasharray="2 1.200"/>
<!-- split with gap -->
<rect x="731" y="78" width="6" height="6" fill="#cfe6f7" stroke="#2f7ed8" stroke-width="1.400"/><rect x="744" y="78" width="6" height="6" fill="#cfe6f7" stroke="#2f7ed8" stroke-width="1.400"/>
<path d="M740.500 74v14" stroke="#e03c31" stroke-width="1.200" stroke-dasharray="2 1.200"/><path d="M737 81h7" stroke="#2f7ed8" stroke-width="1"/>
<!-- unpin -->
<path d="M763 77h5M768 73.500v7M768 75h7v4h-7M775 74v6h2.500v-6z" fill="#f4f5f7" stroke="#4a505a" stroke-width="1.100"/>
<path d="M774 80.500l8 8M782 80.500l-8 8" stroke="#d8272d" stroke-width="2.400"/>
<!-- array -->
<g fill="#f4f8fc" stroke="#2f7ed8" stroke-width="1.400"><rect x="701" y="102.500" width="7" height="7"/><rect x="711.500" y="102.500" width="7" height="7"/><rect x="701" y="113" width="7" height="7"/><rect x="711.500" y="113" width="7" height="7"/></g>
<!-- scale -->
<rect x="731.500" y="102.500" width="18.500" height="18" fill="#bcdcf3" stroke="#2f7ed8" stroke-width="1.400"/><rect x="731.500" y="111" width="9.500" height="9.500" fill="#f4f5f7" stroke="#333a44" stroke-width="1.400"/>
<!-- pin -->
<path d="M763 111h5M768 106.500v9M768 108.500h7v5h-7M775 107v8h2.800v-8z" fill="#f4f5f7" stroke="#4a505a" stroke-width="1.200"/>
<!-- trim single -->
<path d="M702 138h12M702 144h12" stroke="#333a44" stroke-width="1.300"/><path d="M711.500 135.500l4 2.500-4 2.500z" fill="#333a44"/>
<path d="M702 147.500h13" stroke="#5aa3ea" stroke-width="2.600"/><path d="M718.500 133.500V153" stroke="#333a44" stroke-width="1.600"/><path d="M716 133.500V153" stroke="#5aa3ea" stroke-width="1.600"/>
<!-- trim multiple -->
<path d="M733 137h12M733 141h8M733 149.500h8" stroke="#333a44" stroke-width="1.300"/><path d="M742.500 134.500l4 2.500-4 2.500z" fill="#333a44"/>
<path d="M737 145.200h10M741 149.500h6M741 141h6" stroke="#5aa3ea" stroke-width="2.200"/><path d="M750 133.500V153" stroke="#333a44" stroke-width="1.600"/><path d="M747.500 133.500V153" stroke="#5aa3ea" stroke-width="1.600"/>
<!-- delete -->
<path d="M765.500 135.500l14 14M779.500 135.500l-14 14" stroke="#e0272d" stroke-width="3.600"/>
<!-- View panel (disabled) -->
<g fill="#ececec" stroke="#cfcfcf" stroke-width="1.300"><path d="M808 70c3.800 0 6.500 2.800 6.500 6 0 2.500-1.500 4-2.500 5.500v3h-8v-3c-1-1.500-2.500-3-2.500-5.500 0-3.200 2.700-6 6.500-6z"/><rect x="805" y="85" width="6" height="3.500" rx="1"/></g>
<path d="M825.500 78h7l-3.500 4z" fill="#8a8a8a"/>
<g fill="#e6e6e6" stroke="#cfcfcf" stroke-width="1.200" stroke-linejoin="round"><path d="M844 79l5-3.500 9 1.500 5-3v9l-5 4.500h-14z"/><circle cx="856" cy="75" r="4.500" stroke-dasharray="2 1.500"/></g>
<path d="M801 119.500c2-1 4-4 6-7l5.500 3c-3 3-7 5.500-11.500 4z" fill="#d0d0d0"/><path d="M808 112l8-9.500 2.500 2-7 10z" fill="#dadada"/>
<path d="M825.500 108.500h7l-3.500 4z" fill="#8a8a8a"/>
<path d="M843 104h20M843 108h20" stroke="#222" stroke-width="1.800"/><path d="M843 112.500h20" stroke="#222" stroke-width="1.200" stroke-dasharray="2 1.500"/>
<path d="M853.500 113h6v4h3l-6 5.500-6-5.500h3z" fill="#1f7be0"/>
<g fill="#e6e6e6" stroke="#cfcfcf" stroke-width="1.200" stroke-linejoin="round"><path d="M800 136.500l5-3 13.500 9v7l-5 3-13.500-9z"/><path d="M800 136.500l13.500 9 5-3M813.500 145.500v7" fill="none"/></g>
<!-- Measure -->
<path d="M882 81h34" stroke="#333a44" stroke-width="1.800"/><path d="M880.500 81l7-4.500v9zM917.500 81l-7-4.500v9z" fill="#333a44"/>
<rect x="880.500" y="90.500" width="36.500" height="7.500" rx="1" fill="#f3b61f" stroke="#c98d0a" stroke-width="1"/><path d="M884 91v3M888 91v2M892 91v3M896 91v2M900 91v3M904 91v2M908 91v3M912 91v2" stroke="#a87408" stroke-width=".8"/>
<path d="M927.500 85.500h7l-3.500 4z" fill="#333"/>
<path d="M884.500 145.500L913 119" stroke="#333a44" stroke-width="1.700"/><path d="M880 139.500l9.500 10.500M906.500 113.500l11 11" stroke="#333a44" stroke-width="1.500"/>
<path d="M884.500 145.500l2.500-8.500 6 6.500zM913 119l-2.500 8.500-6-6.500z" fill="#333a44"/>
<path d="M927.500 131h7l-3.500 4z" fill="#333"/>
<!-- Create -->
<path d="M955 70.500h-5v35h5M982.500 70.500h5v35h-5" fill="none" stroke="#4a505a" stroke-width="1.700"/>
<g stroke="#4a505a" stroke-width="1.300" stroke-linejoin="round"><path d="M954.500 77.500l4-4h12l-4 4zM966.500 77.500l4-4V87l-4 3.500z" fill="#e3f0fa"/><rect x="954.500" y="77.500" width="12" height="13" fill="#b9daf3" stroke="#2f7ed8"/>
<rect x="954.500" y="90.500" width="12" height="11.500" fill="url(#gGy)"/><path d="M966.500 90.500l4-3.500h12l-4 3.500zM978.500 90.500l4-3.500v11.500l-4 3.500z" fill="#f0f1f3"/><rect x="966.500" y="90.500" width="12" height="11.500" fill="url(#gGy)"/></g>
<path d="M1004 70.500h-5v35h5M1030.500 86v19.500h-5" fill="none" stroke="#4a505a" stroke-width="1.700"/>
<circle cx="1011.500" cy="83" r="8.500" fill="url(#gGy)" stroke="#4a505a" stroke-width="1.400"/>
<g stroke="#4a505a" stroke-width="1.300" stroke-linejoin="round"><path d="M1010.500 88l4-3.500h13l-4 3.500zM1023.500 88l4-3.500V97l-4 3.500z" fill="#f0f1f3"/><rect x="1010.500" y="88" width="13" height="12.500" fill="url(#gGy)"/></g>
<path d="M1029 68l1.500 4.500 4-2.500-1.500 4.500 4.500 1-4.500 1.500 2 4-4.500-1.500-1 4.500-1.500-4.500-4 2 1.500-4.500-4.500-1 4.500-1.500-2-4 4.500 1.500z" fill="#f7a823" stroke="#e0571a" stroke-width=".9"/>
<g stroke="#4a505a" stroke-width="1.300" stroke-linejoin="round"><path d="M950 123l12.500-8.500 24.500 8v22.500l-12.500 7.500-24.500-9z" fill="#e7eaee"/>
<path d="M950 123l24.500 9.500 12.500-10M974.500 132.500V152" fill="none"/><path d="M953 126.500l21.500 8.500v12l-21.500-8.500z" fill="url(#gGy)"/>
<path d="M956.500 119.500l21 7.500M960 117l21 7.500" stroke="#2f7ed8" fill="none"/></g>
<g fill="#ececec" stroke="#cfcfcf" stroke-width="1.300"><rect x="998.500" y="115" width="8.500" height="8"/><rect x="1025" y="115" width="8.500" height="8"/><rect x="998.500" y="141" width="13" height="8"/><path d="M1027.500 136l6.500 6-6.500 6-6.500-6z"/>
<path d="M1010 119h12M1003 126v11M1010 126l10 10" fill="none"/><path d="M1019 116.500l4 2.500-4 2.500zM1000.500 134.500l2.500 4 2.500-4zM1016.500 136.500l5 1-1-5z" fill="#cfcfcf" stroke="none"/></g>


<!-- ================= PROPERTIES PALETTE ICONS ================= -->
<path d="M257 224.500l10.500 10.500M267.500 224.500l-10.500 10.500" stroke="#222" stroke-width="1.800"/>
<rect x="27.500" y="267.500" width="23" height="34.500" rx="1" fill="url(#gGy2)" stroke="#555c68" stroke-width="1.600"/>
<rect x="50.500" y="270" width="12" height="11.500" fill="#e3e6ea" stroke="#555c68" stroke-width="1.500"/>
<rect x="41.500" y="281.500" width="22.500" height="22.500" rx="1" fill="url(#gGy2)" stroke="#555c68" stroke-width="1.600"/>
<path d="M50.500 270v11.500M41.500 281.500h9" stroke="#555c68" stroke-width="1.200" stroke-dasharray="2 1.300"/>
<path d="M260 285.500h10l-5 5z" fill="#333"/>
<path d="M161 342.500l4.500 4.500 4.500-4.500" fill="none" stroke="#333" stroke-width="1.300"/>
<!-- edit type icon -->
<g fill="#f7f7f7" stroke="#4a505a" stroke-width="1.100"><rect x="182.500" y="336.500" width="5.500" height="5.500" rx="1"/><rect x="190" y="336.500" width="5.500" height="5.500" rx="1"/><rect x="182.500" y="344" width="5.500" height="5.500" rx="1"/>
<rect x="189.500" y="342" width="8" height="9.500" rx="1"/></g><rect x="191.500" y="344" width="4" height="2" fill="#2f62a6"/><path d="M191.500 348.500h4" stroke="#4a505a" stroke-width="1"/>
<!-- scroll arrows -->
<path d="M256.500 373.500l5-5 5 5" fill="none" stroke="#444" stroke-width="1.600"/>
<path d="M256.500 924.500l5 5 5-5" fill="none" stroke="#444" stroke-width="1.600"/>
<!-- ================= VIEW TABS ================= -->
<rect x="284" y="222.500" width="11" height="14.500" rx="1" fill="#f1f2f4" stroke="#555c68" stroke-width="1.300"/>
<rect x="289" y="226.500" width="13.500" height="12.500" rx="1" fill="#f6f7f8" stroke="#555c68" stroke-width="1.300"/>
<path d="M295 222.500v4M289 226.500h6" stroke="#555c68" stroke-width="1" stroke-dasharray="1.500 1"/><path d="M292 230h4M292 233v3" stroke="#555c68" stroke-width="1" stroke-dasharray="1.500 1"/>
<path d="M418.500 224l11 11.500M429.500 224l-11 11.500" stroke="#111" stroke-width="1.800"/>
<g fill="#dcdcdc" stroke="#9a9a9a" stroke-width="1.200" stroke-linejoin="round"><path d="M444 229l5.500-6.500 11.500 3-4 6z"/><path d="M445.500 229v7.500l5.500 2.500v-8.500zM451 230.500l8-1.500v7.500l-8 2.500z" fill="#ececec"/></g>
<g fill="#a9a9a9" stroke="#8f8f8f" stroke-width="1" stroke-linejoin="round"><path d="M603.500 230l9.500-8.500 9.500 8.500z"/><path d="M607.500 230h11v8.500h-11z" fill="#d9d9d9"/></g>
<path d="M1903 225.500h12" stroke="#222" stroke-width="1.600"/><path d="M1903.500 228.500h11l-5.500 6z" fill="#222"/>
<!-- ================= NAV BAR ================= -->
<circle cx="1890" cy="252.500" r="3.800" fill="#d7d7d7" stroke="#bdbdbd"/><path d="M1888 250.500l4 4M1892 250.500l-4 4" stroke="#fff" stroke-width="1.200"/>
<path d="M1877 266.500h9.500v11c0 5-3.500 8.500-9 8.500s-9.500-4-9.500-9.500 4-10 9-10z" fill="#ececec" stroke="#a9a9a9" stroke-width="1.200"/>
<circle cx="1877.500" cy="276.500" r="5.300" fill="#f8f8f8" stroke="#a9a9a9" stroke-width="1.200"/><circle cx="1877.500" cy="276.500" r="2.800" fill="#fff" stroke="#b5b5b5" stroke-width="1"/>
<text x="1880" y="289" font-family="Liberation Sans, sans-serif" font-size="9" font-weight="700" fill="#6a9bd0" textLength="11.500" lengthAdjust="spacingAndGlyphs">2D</text>
<path d="M1876.500 295.500h6l-3 3.300z" fill="#8a8a8a"/>
<path d="M1867 303.500h26" stroke="#c9c9c9" stroke-width="1"/>
<rect x="1872" y="312" width="11" height="10.500" fill="#b9d8a6" stroke="#8fbf7a" stroke-width="1"/>
<circle cx="1882.500" cy="322" r="3.300" fill="#f4f4f4" stroke="#9a9a9a" stroke-width="1.200"/><path d="M1885 324.500l3 3" stroke="#9a9a9a" stroke-width="1.600"/>
<path d="M1876.500 338h6l-3 3.300z" fill="#8a8a8a"/>
<circle cx="1890" cy="355" r="3.800" fill="#d7d7d7" stroke="#bdbdbd"/><path d="M1887.500 355h5" stroke="#fff" stroke-width="1.400"/>
<path d="M1903.500 258.500l5-5 5 5" fill="none" stroke="#333" stroke-width="1.800"/>
<path d="M1903.500 961.500l5 5 5-5" fill="none" stroke="#333" stroke-width="1.800"/>
<!-- ================= VIEW CONTROL BAR ================= -->
<g>
 <rect x="371.500" y="977.500" width="18" height="13.500" fill="#f4f4f4" stroke="#333" stroke-width="1"/>
 <path d="M372 980h17M372 982.500h17M372 985h17M372 987.500h17" stroke="#555" stroke-width=".8" stroke-dasharray="1.500 1"/>
 <path d="M374 978v13M377 978v13M380 978v13M383 978v13M386 978v13" stroke="#555" stroke-width=".8" stroke-dasharray="1.500 1"/>
 <path d="M396 982l4-4h14.500l-4 4zM410.500 982l4-4v8.500l-4 4z" fill="#7fb6e6" stroke="#2b62a8" stroke-width="1"/><rect x="396" y="982" width="14.500" height="8.500" fill="#dbe9f6" stroke="#2b62a8" stroke-width="1"/><path d="M398 985h10M398 987.500h10" stroke="#c0392b" stroke-width="1"/>
 <circle cx="427.500" cy="982.500" r="4.300" fill="#f7c948" stroke="#d88a16" stroke-width="1"/><path d="M427.500 975v2M420 982.500h2M433 982.500h2M422.200 977.200l1.500 1.500M432.800 977.200l-1.500 1.500M422.200 987.800l1.500-1.500" stroke="#d88a16" stroke-width="1.200"/>
 <path d="M431 985.500l6.500 6M437.500 985.500l-6.500 6" stroke="#d8272d" stroke-width="1.800"/>
 <circle cx="453.500" cy="982.500" r="4.500" fill="#f4f5f7" stroke="#2b62a8" stroke-width="1.300"/><path d="M449 990.500h9" stroke="#4a505a" stroke-width="2"/><path d="M457 985.500l6.500 6M463.500 985.500l-6.500 6" stroke="#d8272d" stroke-width="1.800"/>
 <path d="M474 983h11v7.500h-11zM476.500 983v-3.500h11.500v8.500h-3" fill="#dbe9f6" stroke="#2b62a8" stroke-width="1.500"/><path d="M470.500 987h4" stroke="#2b62a8" stroke-width="2"/><path d="M480 984l7.500 7M487.500 984l-7.500 7" stroke="#d8272d" stroke-width="1.800"/>
 <path d="M498 983h11v7.500h-11zM500.500 983v-3.500h11.500v8.500h-3" fill="#dbe9f6" stroke="#2b62a8" stroke-width="1.500"/><path d="M494.500 987h4" stroke="#2b62a8" stroke-width="2"/><path d="M501 986.500h4" stroke="#c0392b" stroke-width="1.200"/><path d="M506.500 983c2.500-1.500 5 0 5 2 0 1.500-1 2-1.500 3v2h-3v-2c-.5-1-1.500-1.500-1.500-3" fill="#f8f8f8" stroke="#777" stroke-width="1"/>
 <path d="M520 981l4 4.500c1.500 1.500 3.500 1 4-.5M538 980.500l-4 5c-1.500 1.500-4 1.500-5-.5" fill="none" stroke="#333" stroke-width="1.200"/><ellipse cx="524.500" cy="986.500" rx="3.300" ry="2.600" fill="#e9f1fa" stroke="#333" stroke-width="1"/><ellipse cx="533" cy="986.500" rx="3.300" ry="2.600" fill="#e9f1fa" stroke="#333" stroke-width="1"/>
 <path d="M553.500 979.500c2.500 0 4 1.800 4 3.800 0 1.500-1 2.300-1.500 3.200v1.500h-5v-1.500c-.5-.9-1.500-1.700-1.500-3.200 0-2 1.500-3.800 4-3.800z" fill="#cfe6f7" stroke="#2f7ed8" stroke-width="1.100"/><rect x="551.500" y="988.500" width="4" height="2" fill="#888"/>
 <rect x="571" y="980" width="15" height="10.500" rx="1" fill="#f4f5f7" stroke="#333" stroke-width="1.300"/><circle cx="578.500" cy="985.500" r="2.800" fill="none" stroke="#333" stroke-width="1"/><path d="M573 978.500h4" stroke="#333" stroke-width="1.400"/><path d="M584 986h5v5" fill="none" stroke="#333" stroke-width="1" stroke-dasharray="1.500 1"/>
 <path d="M595 990.500v-8l5-4 5 4v8M605 983h8v7.500M598 990.500v-5M601 990.500v-5" fill="#e4e4e4" stroke="#4a505a" stroke-width="1.100"/><circle cx="609.500" cy="984.500" r="3.300" fill="#f7c948" stroke="#d88a16" stroke-width=".9"/><rect x="608" y="988" width="3" height="2.500" fill="#888"/>
 <path d="M621 976.500v14M621 979h16.500M637.500 976.500v5" fill="none" stroke="#333" stroke-width="1.200"/><path d="M621 979l3-1.800v3.600zM637.500 979l-3-1.800v3.600z" fill="#333"/><rect x="628.500" y="984" width="9" height="6.500" fill="#6a6f78" stroke="#333" stroke-width="1"/><path d="M624 987.500h4" stroke="#333" stroke-width="1" stroke-dasharray="1.500 1"/>
 <path d="M655.500 979.500l-5 5 5 5" fill="none" stroke="#222" stroke-width="1.600"/>
</g>
<path d="M1885.500 979.500l5 5-5 5" fill="none" stroke="#222" stroke-width="1.600"/>
<path d="M1913.500 984v1.500M1913.500 988v1.500M1913.500 992v1.500M1909.500 988v1.500M1909.500 992v1.500M1905.500 992v1.500" stroke="#9a9a9a" stroke-width="2"/>
<!-- ================= STATUS BAR ICONS ================= -->
<g><rect x="690" y="1012" width="7.500" height="12" rx="1" fill="#dbe9f6" stroke="#2b62a8" stroke-width="1.200"/><rect x="700" y="1012" width="7.500" height="12" rx="1" fill="#dbe9f6" stroke="#2b62a8" stroke-width="1.200"/>
<path d="M693 1012v-4.500h11.500v4.500" fill="none" stroke="#2b62a8" stroke-width="1.200"/><rect x="695.500" y="1005.500" width="6.500" height="5" fill="#7dc67a" stroke="#2f8a3a" stroke-width="1"/><path d="M703.500 1015v6" stroke="#222" stroke-width="1.400"/></g>
<path d="M957.500 1011.500l4.500 4.500 4.500-4.500" fill="none" stroke="#9a9a9a" stroke-width="1.200"/><path d="M950.500 1004v20" stroke="#e2e2e2"/>
<g fill="#8f8f8f"><path d="M984 1007h13v5h-6v4h-3v-4h-4z"/><path d="M981 1024l3-7h4l-2 7z"/><path d="M991 1015h7v2h-7z" fill="#b3b3b3"/></g>
<rect x="1040.500" y="1006.500" width="18.500" height="17" rx="1" fill="#f4f5f7" stroke="#222" stroke-width="1.400"/><rect x="1041" y="1007" width="17.500" height="3.500" fill="#222"/><path d="M1043.500 1014h3M1048.500 1014h8M1043.500 1017.500h3M1048.500 1017.500h8M1043.500 1021h3M1048.500 1021h8" stroke="#222" stroke-width="1.300"/>
<rect x="1071" y="1006" width="17" height="17" fill="#a6a6a6"/><path d="M1071 1023l8-8v4h5v4z" fill="#7d7d7d"/><path d="M1074 1012h6l-2-2M1080 1012l-2 2" stroke="#ddd" stroke-width="1" fill="none"/>
<path d="M1330.500 1004v21" stroke="#e0e0e0"/><path d="M1338.500 1011.500l4.500 4.500 4.500-4.500" fill="none" stroke="#9a9a9a" stroke-width="1.200"/>
<g>
 <path d="M1634 1009.500c0-2 6-2 6 0s6 2 6 0-6-2-6 0-6 2-6 0z" fill="#f3c13a" stroke="#a87408" stroke-width="1"/><path d="M1636 1012l3.500-1 3.500 1v3h-7z" fill="#f3c13a" stroke="#a87408" stroke-width=".8"/>
 <path d="M1641 1012.500v11l2.600-2.300 1.800 3.800 1.500-.7-1.800-3.700 3.400-.2z" fill="#fff" stroke="#222" stroke-width=".9"/>
 <path d="M1664 1020l8-10h6l-6 10zM1664 1015h7" fill="none" stroke="#2b62a8" stroke-width="1.200"/><path d="M1676.500 1006.500l5.500 5.500M1682 1006.500l-5.500 5.500" stroke="#d8272d" stroke-width="1.800"/><path d="M1674 1013.500v11l2.600-2.300 1.800 3.800 1.500-.7-1.800-3.700 3.400-.2z" fill="#fff" stroke="#222" stroke-width=".9"/>
 <path d="M1695 1007h11v3l-1.500 1 1 4h-10l1-4-1.500-1z" fill="#f08a3c" stroke="#c9541a" stroke-width=".9"/><path d="M1700.500 1015v7" stroke="#7a3010" stroke-width="1.200"/><path d="M1704.500 1013.500v11l2.600-2.300 1.800 3.800 1.500-.7-1.800-3.700 3.400-.2z" fill="#fff" stroke="#222" stroke-width=".9"/>
 <path d="M1724 1008.500l5-1.500 5 1.500v13l-5 1.500-5-1.500z" fill="#dbe9f6" stroke="#2b62a8" stroke-width="1.200"/><path d="M1736.500 1006.500l5.500 5.500M1742 1006.500l-5.500 5.500" stroke="#d8272d" stroke-width="1.800"/><path d="M1734.500 1013.500v11l2.600-2.300 1.800 3.800 1.500-.7-1.800-3.700 3.400-.2z" fill="#fff" stroke="#222" stroke-width=".9"/>
 <path d="M1760 1006v12M1754 1012h12" stroke="#222" stroke-width="1.300"/><path d="M1760 1005l-2 3h4zM1753 1012l3-2v4zM1767 1012l-3-2v4z" fill="#222"/><path d="M1764.500 1013.500v11l2.600-2.300 1.800 3.800 1.500-.7-1.800-3.700 3.400-.2z" fill="#fff" stroke="#222" stroke-width=".9"/>
 <circle cx="1791.500" cy="1015" r="6" fill="none" stroke="#b0b0b0" stroke-width="3.500" stroke-dasharray="3 1.700"/>
 <path d="M1811 1007.500h18l-6.500 8v8.500l-5-3v-5.500z" fill="#d6d9de" stroke="#4a505a" stroke-width="1.300" stroke-linejoin="round"/>
</g>
<!-- ================= TASKBAR ICONS ================= -->
<path d="M20 1048l8.500-1.300v8.500H20zM29.500 1046.500l10.500-1.500v10.200H29.500zM20 1056.200h8.500v8.500L20 1063.400zM29.500 1056.200H40v10.200l-10.500-1.500z" fill="#fff"/>
<circle cx="88" cy="1052" r="6.300" fill="none" stroke="#222" stroke-width="1.600"/><path d="M83.500 1056.500l-8 8" stroke="#222" stroke-width="1.800"/>
<g stroke="#fff" stroke-width="1.400" fill="none"><rect x="511" y="1049" width="12" height="10"/><path d="M509.500 1045.500h15M509.500 1062.500h15M528.500 1045v5M528.500 1054v10"/><rect x="527.500" y="1050.500" width="2" height="2" fill="#fff"/></g>
<g><path d="M570.500 1045.500h9l2 2.500h16v17.500h-27z" fill="#f3b62a"/><path d="M570.500 1050h27v15.500h-27z" fill="#fbd466"/><path d="M570.500 1061h27v4.500h-27z" fill="#e8a31c"/><rect x="577.500" y="1057" width="13" height="8.500" fill="#3b8fe0"/><rect x="580" y="1060" width="8" height="5.500" fill="#fbd466"/></g>
<g><circle cx="645" cy="1054.500" r="13.500" fill="#e8453c"/><path d="M645 1054.500L633.300 1061.250A13.500 13.500 0 0 0 645 1068z" fill="#34a853"/><path d="M645 1054.500L633.300 1061.250A13.500 13.500 0 0 1 633.300 1047.750z" fill="#34a853"/><path d="M645 1054.500l0 13.500a13.500 13.500 0 0 0 11.700-20.250z" fill="#fbbc05"/><path d="M645 1054.500l11.700-6.750A13.500 13.500 0 0 0 633.300 1047.750z" fill="#e8453c"/><circle cx="645" cy="1054.500" r="6.200" fill="#fff"/><circle cx="645" cy="1054.500" r="4.800" fill="#4a8af4"/>
<circle cx="653.500" cy="1062" r="8.500" fill="#ece6ee" stroke="#d9cfe0" stroke-width=".8"/><path d="M649.500 1056.500l8 11M657.500 1056.500l-8 11M653.500 1056v12" stroke="#e7a2c4" stroke-width="1.500"/></g>
<g><circle cx="707.500" cy="1055" r="15" fill="#1f8fd6"/><path d="M693 1051c2-8 10-12 17-10.500 7 1.500 12.500 7.500 12 14.500-.3 4-3.500 6.500-8 6.500-3 0-5-1.500-5-3.500 0-1.500 1-2 1-3.500 0-2.500-2.500-4.500-5.500-4.500-5 0-9 3.500-11.500 1z" fill="#57d3a0"/><path d="M693.500 1059c-1-7 4-12 10-12 4 0 6.500 2.500 6.500 5-2-1.500-5-1-6.500 1.500-2 3.500-.5 9 5 12 3 1.700 7 1.500 10-.5-3 4-8 6-13.500 4.500-6-1.500-10.500-5.500-11.500-10.500z" fill="#1565b8"/></g>
<g><path d="M755.500 1044l4-3.500v24l-2.500 2z" fill="#5aa0f2"/><path d="M757 1063h27v7h-27z" fill="#0b3a9e"/><path d="M759 1040.500h25.500v23H759z" fill="url(#gRv)"/>
<path d="M765.500 1044.500h6c3 0 4.600 1.500 4.600 3.800 0 1.800-1 3-2.600 3.500l3.300 5.200h-3l-2.900-4.800h-2.700v4.800h-2.700z M768.200 1046.800v3.500h3.100c1.400 0 2.100-.6 2.100-1.750s-.7-1.750-2.100-1.750z" fill="#fff" fill-rule="evenodd"/>
<text x="763.500" y="1069" font-family="Liberation Sans, sans-serif" font-size="6.500" font-weight="700" fill="#fff" textLength="13" lengthAdjust="spacingAndGlyphs">RVT</text></g>
<g><path d="M1402 1043.500a7.500 7.500 0 1 0 5 13 8.500 8.500 0 0 1-5-13z" fill="#f5c842"/><path d="M1399 1066.500c-4 0-6-2-6-5s2.500-5 5.500-4.500c1-3.500 4-5.500 7.500-5.500 4.500 0 7.500 3 7.500 6.500 3 0 5.500 1.500 5.500 4.200s-2.500 4.300-5.500 4.300z" fill="#eef1f5"/></g>
<path d="M1612.500 1059l7.500-7.500 7.500 7.500" fill="none" stroke="#fff" stroke-width="1.500"/>
<g stroke="#fff" fill="none" stroke-width="1.300"><rect x="1651.500" y="1049.500" width="17.500" height="10.500"/><path d="M1650 1052.500v4.500"/><rect x="1654" y="1052" width="12.500" height="5.500" fill="#fff"/><path d="M1651 1047.500l3 2M1649 1050h2"/></g>
<g stroke="#fff" fill="none" stroke-width="1.300"><path d="M1690 1052h3.500l5-4.500v15l-5-4.500h-3.500z"/><path d="M1701.500 1051.500c1.500 2 1.500 5 0 7"/><path d="M1704.500 1049c2.800 3.500 2.800 8.500 0 12" stroke="#aaa"/><path d="M1707.500 1046.500c4 5 4 12 0 17" stroke="#777"/></g>
<g stroke="#fff" fill="none" stroke-width="1.400"><path d="M1737 1065c-2-2-1.500-5 .5-6.500l3.500-2.500c1.500-1 3.500-.5 4.500 1M1754 1047c2 2 1.500 5-.5 6.500l-3.500 2.500c-1.500 1-3.500.5-4.500-1M1744 1066l5-19c.5-2 3-2.500 4.500-1"/></g>
<path d="M1869.500 1046.500h19v14h-6.500l-3.500 4v-4h-9z" fill="none" stroke="#fff" stroke-width="1.400"/>

<!-- title bar right -->
<path d="M1481.500 11.500v9l-4.500-4.500z" fill="#333"/>
<g fill="#f4f5f7" stroke="#333a44" stroke-width="1.300"><rect x="1493.500" y="13" width="6.500" height="11.500" rx="1.500"/><rect x="1505" y="13" width="6.500" height="11.500" rx="1.500"/><path d="M1495.500 13V9.500h3V13M1506.500 13V9.500h3V13M1500 15.500h5"/></g>
<path d="M1532.500 8c3 0 4.500 2.200 4.500 5s-1.800 5-4.500 5-4.500-2.200-4.500-5 1.500-5 4.500-5z" fill="#3a6fe0" stroke="#1c3a8a" stroke-width="1"/>
<path d="M1522.500 25c.5-4 3-6.500 6.500-7l3.500 2.500 3.500-2.500c3.500.5 6 3 6.500 7z" fill="#3a6fe0" stroke="#1c3a8a" stroke-width="1"/>
<path d="M1653.500 14h7l-3.500 4z" fill="#333"/>
<path d="M1674 8.500h3.500l3 11h11.500l2.500-8h-15.500" fill="#dfe7f5" stroke="#2b3f7a" stroke-width="1.400" stroke-linejoin="round"/><circle cx="1682" cy="23" r="1.800" fill="#fff" stroke="#2b3f7a" stroke-width="1.200"/><circle cx="1690" cy="23" r="1.800" fill="#fff" stroke="#2b3f7a" stroke-width="1.200"/>
<path d="M1706.500 5V27" stroke="#bdbdbd"/>
<circle cx="1728" cy="16" r="9.300" fill="#f7f7f7" stroke="#333a44" stroke-width="1.400"/>
<text x="1724" y="21.500" font-family="Liberation Sans, sans-serif" font-size="15" font-weight="700" fill="#2d4fb0">?</text>
<path d="M1747.500 14h7l-3.500 4z" fill="#333"/>
<path d="M1836.500 20.500h10" stroke="#111" stroke-width="2.400"/>
<path d="M1869 13V10.500h11v8.500h-3" fill="none" stroke="#111" stroke-width="1.800"/><rect x="1865.500" y="14" width="10.500" height="8.500" fill="none" stroke="#111" stroke-width="1.800"/><path d="M1865.500 15h10.500" stroke="#111" stroke-width="2.400"/>
<path d="M1898 10l13 13M1911 10l-13 13" stroke="#111" stroke-width="2.200"/>
<!-- tab row extra -->
<rect x="1212.500" y="45" width="18" height="10" rx="2.500" fill="#f4f4f4" stroke="#333" stroke-width="1.200"/><path d="M1218 52h7l-3.500-3.800z" fill="#333"/>
<path d="M1236.500 48.500h7l-3.500 4z" fill="#333"/>
</svg>

<svg width="1920" height="1080" viewBox="0 0 1920 1080" shape-rendering="auto">
<defs>
  <linearGradient id="gFloor" x1="0" x2="1" y1="0" y2="0" spreadMethod="repeat" gradientUnits="userSpaceOnUse" gradientTransform="translate(765 0) scale(173 1)">
    <stop offset="0" stop-color="#fbe2a0"/><stop offset=".10" stop-color="#fbe3a2"/><stop offset=".20" stop-color="#fae09d"/>
    <stop offset=".30" stop-color="#fbe3a2"/><stop offset=".45" stop-color="#fce5a4"/>
    <stop offset=".55" stop-color="#fce7a7"/><stop offset=".65" stop-color="#fbe4a3"/><stop offset=".80" stop-color="#fbe2a0"/>
    <stop offset=".90" stop-color="#fae09d"/><stop offset="1" stop-color="#fbe2a0"/>
  </linearGradient>
  <pattern id="pPatio" x="577" y="740" width="72" height="30" patternUnits="userSpaceOnUse">
    <rect width="72" height="30" fill="#f0bb81"/>
    <rect x="0" y="0" width="36" height="5" fill="#eeb378"/><rect x="36" y="0" width="36" height="5" fill="#f1bd84"/>
    <rect x="0" y="5" width="22" height="5" fill="#f2c08a"/><rect x="22" y="5" width="50" height="5" fill="#efb67b"/>
    <rect x="0" y="10" width="48" height="5" fill="#f1bb80"/><rect x="48" y="10" width="24" height="5" fill="#ecae72"/>
    <rect x="0" y="15" width="16" height="5" fill="#eeb479"/><rect x="16" y="15" width="34" height="5" fill="#f4cb95"/><rect x="50" y="15" width="22" height="5" fill="#efb77d"/>
    <rect x="0" y="20" width="40" height="5" fill="#f1bd84"/><rect x="40" y="20" width="32" height="5" fill="#ecaf73"/>
    <rect x="0" y="25" width="28" height="5" fill="#efb57a"/><rect x="28" y="25" width="44" height="5" fill="#f2bf88"/>
  </pattern>
  <pattern id="pSlatA" x="1037.3" y="0" width="6.17" height="10" patternUnits="userSpaceOnUse">
    <rect width="6.17" height="10" fill="#f1a775"/><rect x="0" width="1.100" height="10" fill="#0d0704"/>
  </pattern>
  <pattern id="pSlatB" x="1104.6" y="0" width="12.34" height="10" patternUnits="userSpaceOnUse">
    <rect width="12.34" height="10" fill="#f1a775"/><rect x="0" width="6.5" height="10" fill="#ecd18b"/><rect x="0" width="1.100" height="10" fill="#0d0704"/><rect x="6.17" width="1.100" height="10" fill="#0d0704"/>
  </pattern>
  <pattern id="pHatchH" x="775" y="428" width="33" height="5" patternUnits="userSpaceOnUse">
    <path d="M-1.500 0L3.500 5M20 0L15 5M31.500 0L36.500 5" stroke="#000" stroke-width="1.600" fill="none"/>
  </pattern>
  <pattern id="pHatchV" x="568.500" y="440" width="5" height="33" patternUnits="userSpaceOnUse">
    <path d="M0 -1.500L5 3.500M0 20L5 15M0 31.500L5 36.500" stroke="#000" stroke-width="1.600" fill="none"/>
  </pattern>
  <pattern id="pHatchV2" x="1304.500" y="440" width="5" height="33" patternUnits="userSpaceOnUse">
    <path d="M5 -1.500L0 3.500M5 20L0 15M5 31.500L0 36.500" stroke="#000" stroke-width="1.600" fill="none"/>
  </pattern>
  <linearGradient id="gRim" x1="0" x2="1" y1="0" y2="0"><stop offset="0" stop-color="#77736c"/><stop offset=".5" stop-color="#a39f97"/><stop offset="1" stop-color="#77736c"/></linearGradient>
  <linearGradient id="gStove" x1="0" x2="1" y1="1" y2="0"><stop offset="0" stop-color="#4a3b30"/><stop offset=".35" stop-color="#2f2d2a"/><stop offset="1" stop-color="#2b2b29"/></linearGradient>
  <radialGradient id="gBath" cx=".85" cy=".2" r="1"><stop offset="0" stop-color="#ece3d4"/><stop offset=".5" stop-color="#d9ccb8"/><stop offset="1" stop-color="#c8b8a2"/></radialGradient>
  <linearGradient id="gChair" x1="0" x2="1" y1="1" y2="0"><stop offset="0" stop-color="#e08c47"/><stop offset=".6" stop-color="#d07a38"/><stop offset="1" stop-color="#a85a28"/></linearGradient>
  <linearGradient id="gChair2" x1="0" x2="1" y1="1" y2="0"><stop offset="0" stop-color="#e08c47"/><stop offset=".55" stop-color="#d07a38"/><stop offset="1" stop-color="#b0602a"/></linearGradient>
</defs>

<!-- ============ PATIO (semi-circle) ============ -->
<path d="M579 727 A232.4 232.4 0 0 0 1017.5 727 Z" fill="url(#pPatio)"/>
<path d="M579 727 A232.4 232.4 0 0 0 1017.5 727" fill="none" stroke="#000" stroke-width="7.2"/>
<path d="M579 727 A232.4 232.4 0 0 0 1017.5 727" fill="none" stroke="#9a958d" stroke-width="5.2"/>

<!-- ============ FLOOR ============ -->
<rect x="591" y="451" width="695" height="262" fill="url(#gFloor)"/>
<rect x="1285" y="493" width="24.5" height="100" fill="url(#gFloor)"/>

<!-- ============ OUTER WALLS ============ -->
<g shape-rendering="crispEdges">
<!-- top wall -->
<rect x="568" y="427" width="742" height="6" fill="#f3d692"/>
<rect x="568" y="427" width="190" height="6" fill="#cbc2ae"/>
<rect x="573" y="433" width="732" height="8" fill="#5c5b52"/>
<rect x="581" y="441" width="716" height="6" fill="#e9a168"/>
<rect x="587" y="447" width="704" height="4" fill="#5c5b52"/>
<!-- left wall -->
<rect x="568" y="427" width="6" height="285" fill="#f3d692"/>
<rect x="568" y="427" width="6" height="185" fill="#cbc2ae"/>
<rect x="573" y="433" width="9" height="290" fill="#5c5b52"/>
<rect x="581" y="441" width="7" height="284" fill="#e9a168"/>
<rect x="587" y="447" width="4" height="257" fill="#5c5b52"/>
<rect x="588" y="704" width="4" height="8" fill="#fbe2a0"/>
<!-- right wall -->
<rect x="1304" y="427" width="6" height="65" fill="#f3d692"/>
<rect x="1296" y="433" width="9" height="59" fill="#5c5b52"/>
<rect x="1290" y="441" width="7" height="51" fill="#e9a168"/>
<rect x="1286" y="447" width="5" height="45" fill="#5c5b52"/>
<rect x="1304" y="594" width="6" height="133" fill="#f3d692"/>
<rect x="1296" y="594" width="9" height="129" fill="#5c5b52"/>
<rect x="1290" y="594" width="7" height="121" fill="#e9a168"/>
<rect x="1286" y="594" width="5" height="115" fill="#5c5b52"/>
<!-- bottom wall (right part) -->
<rect x="948" y="704" width="343" height="5" fill="#5c5b52"/>
<rect x="948" y="708" width="349" height="7" fill="#e9a168"/>
<rect x="948" y="714" width="357" height="9" fill="#5c5b52"/>
<rect x="948" y="722" width="362" height="5" fill="#f3d692"/>
</g>
<rect x="568" y="428" width="741.500" height="4.500" fill="url(#pHatchH)"/>
<rect x="568.500" y="428" width="4.500" height="284" fill="url(#pHatchV)"/>
<rect x="1304.500" y="428" width="5" height="64" fill="url(#pHatchV2)"/>
<rect x="1304.500" y="594" width="5" height="133" fill="url(#pHatchV2)"/>
<rect x="948" y="722.500" width="361.500" height="4" fill="url(#pHatchH)"/>
<g shape-rendering="crispEdges" stroke="#000" stroke-width="1" fill="none">
<path d="M568 427.500H1310 M573 432.500H1305 M581 440.500H1297 M587 446.500H1291"/>
<path d="M590 450H1287" stroke-width="1.600"/>
<path d="M568.500 427V712 M573.500 432V724 M581.500 440V725 M587.500 446V712"/>
<path d="M591 449V704" stroke-width="1.600"/><path d="M587.500 703.500H591"/>
<path d="M1309.500 427V492 M1304.500 432V492 M1296.500 440V492 M1290.500 446V492 M1286.500 450V492"/>
<path d="M1309.500 594V727 M1304.500 594V723 M1296.500 594V715 M1290.500 594V709 M1286.500 594V705"/>
<path d="M948 704.500H1287 M948 708.500H1291 M948 714.500H1297 M948 722.500H1305 M948 726.500H1310"/>
</g>
<!-- green corners -->
<g fill="#0b6a48" stroke="#000" stroke-width=".9" stroke-linejoin="miter">
<path d="M564.500 424.500H577.500V428H590L578 432.500H573.500V444L568.500 436.500H564.500Z"/>
<path d="M1312.500 424.500H1300V428H1288L1299 432.500H1304.500V444L1309.500 436.500H1312.500Z"/>
<path d="M1312.500 730.500H1300.500V727H1290L1299 722.500H1304.500V712L1309.500 717.500H1312.500Z"/>
<path d="M564.500 718H569V713L570.500 709.500L573.500 716V722.500H582V725L578 730.500H564.500Z"/>
</g>
<path d="M1309.500 480l-3 4v8h3z" fill="#0b6a48"/>

<!-- ============ BATHROOM ============ -->
<rect x="591.5" y="451" width="160" height="154" fill="url(#gBath)"/>
<!-- shower -->
<rect x="592.500" y="451.500" width="110" height="110" fill="#fff" stroke="#000" stroke-width="1" shape-rendering="crispEdges"/>
<path d="M596.500 454H698.500L700.500 456V554.500L698.500 556.500H596.500L594.500 554.500V456Z" fill="#fffdf0" stroke="#000" stroke-width="1.300"/>
<path d="M594 558.5H702 M598 558.5V561 M671 558.5V561" stroke="#000" stroke-width=".7" fill="none"/>
<circle cx="647" cy="506" r="5" fill="#000"/>
<g shape-rendering="crispEdges">
<rect x="595" y="502" width="9" height="8" fill="#000"/>
<rect x="595" y="504" width="17" height="3" fill="#fff"/>
<path d="M596 503.500h8M596 508.500h8" stroke="#fff" stroke-width="1" stroke-dasharray="1 2"/>
<path d="M604 503.500H611.500M604 507.500H611.500" stroke="#000" stroke-width="1"/>
<rect x="598.500" y="496.500" width="2" height="6" fill="#fff" stroke="#000" stroke-width="1"/>
<rect x="602" y="500" width="2" height="2" fill="#000"/>
<rect x="612" y="501" width="11" height="11" fill="#fff" stroke="#000" stroke-width="2"/>
<rect x="614.500" y="503.500" width="6" height="6" fill="#fff" stroke="#000" stroke-width="1"/>
<rect x="613" y="503" width="3" height="5" fill="#000"/><rect x="614" y="504" width="1" height="2" fill="#fff"/>
</g>
<path d="M660 562v4.5a2 2 0 0 0 4 0V562" stroke="#000" stroke-width=".8" fill="#e8e0d0"/>
<!-- toilet -->
<path d="M707.800 470C704.500 490 705 510 713 522C717.500 529 722.500 534 727.700 535.500C733 534 738 529 742.500 522C750.500 510 751 490 747.600 470Z" fill="#fff" stroke="#000" stroke-width="1" stroke-dasharray="10 1.200"/>
<path d="M706.700 451.500H748.300V462C748.300 466 745 469.500 739 470.300H716C710 469.500 706.700 466 706.700 462Z" fill="#fff" stroke="#000" stroke-width="1"/>
<path d="M709 465.500C711 469 714 470.600 718 470.800H737C741 470.600 744 469 746 465.500" fill="none" stroke="#000" stroke-width="1.800"/>
<path d="M719 490H736.500C741 491.500 743.500 497 743.500 503C743.500 514 737 523 727.700 529C718.500 523 712 514 712 503C712 497 714.500 491.500 719 490Z" fill="#fff" stroke="#000" stroke-width="1"/>
<rect x="721" y="497" width="13" height="19.500" rx="5.500" ry="6" fill="#fff" stroke="#000" stroke-width="1"/>
<ellipse cx="727.700" cy="460" rx="4.200" ry="3.200" fill="#fff" stroke="#000" stroke-width="1"/><ellipse cx="727.700" cy="460" rx="2" ry="1.600" fill="#777" stroke="#000" stroke-width=".7"/>
<!-- towel hooks -->
<g fill="none" stroke="#000" stroke-width=".9">
 <path d="M673 604.5C666 596 668 592 672.5 592S679 596 673 604.5"/><path d="M682.5 604.5C675.5 596 677.5 592 682 592S688.5 596 682.5 604.5"/>
 <path d="M692 604.5C685 596 687 592 691.5 592S698 596 692 604.5"/><path d="M701.5 604.5C694.500 596 696.5 592 701 592S707.5 596 701.5 604.5"/>
 <path d="M711 604.5C704 596 706 592 710.500 592S717 594.5 716.5 600"/>
</g>
<!-- interior walls -->
<rect x="751.5" y="447" width="13" height="84.5" fill="#5c5b52"/>
<rect x="764.5" y="451" width="1.3" height="80" fill="#e9a168"/>
<path d="M751.5 450.5V531.5 M764.5 450.5V531.5" stroke="#000" stroke-width="1"/>
<rect x="587.5" y="605.7" width="72.5" height="12.3" fill="#5c5b52"/>
<rect x="591" y="604.2" width="69" height="1.5" fill="#e9a168"/>
<path d="M591 618.2H660" stroke="#000" stroke-width="1"/>
<!-- white openings -->
<rect x="751.5" y="531.5" width="14" height="92" fill="#fff"/>
<rect x="660" y="604.5" width="92" height="14.3" fill="#fff"/>
<path d="M751.5 531.5V623.5M765.5 531.5V623.5" stroke="#000" stroke-width="1.1" stroke-dasharray="15 8 20 9 26 7"/>
<path d="M660 604.7H752M660 618.6H752" stroke="#000" stroke-width="1.1" stroke-dasharray="22 9 18 8 14 9"/>
<path d="M751.5 623.5H765.5" stroke="#000" stroke-width="1"/>
<!-- closet + floor drain -->
<rect x="591.3" y="618.7" width="31.3" height="74" fill="#fff" stroke="#000" stroke-width=".8"/>
<path d="M638.9 623.2l6.6 2.8 2.8 6.600-2.8 6.600-6.600 2.800-6.600-2.800-2.800-6.600 2.800-6.600Z" fill="#3b2e29" stroke="#000" stroke-width="1"/>
<circle cx="638.9" cy="632.6" r="6.500" fill="#4b3b34" stroke="#1a1210" stroke-width=".8"/>
<path d="M638.9 632.600l-4.500-4.500M638.9 632.600l5.500-3M638.9 632.600l-2 6M638.9 632.600l5 3.500" stroke="#1a1210" stroke-width=".8"/>

<!-- ============ KITCHEN ============ -->
<path d="M765.500 450.500H1059.700V527.500H765.500Z" fill="#fff"/>
<rect x="1059.700" y="450.500" width="109.500" height="30.500" fill="#fff"/>
<path d="M1059.700 481H1169.200V450.500 M1059.700 450.500V527.500H765.500" stroke="#000" stroke-width="1" fill="none"/>
<path d="M1059.700 492C1059.700 512 1045 524 1024 525" stroke="#000" stroke-width="1" fill="none"/>
<!-- sink -->
<rect x="774.500" y="455.500" width="128.300" height="64.200" fill="#fff" stroke="#000" stroke-width="1"/>
<rect x="778.300" y="469.200" width="58.400" height="46.600" rx="7" fill="#fff" stroke="#000" stroke-width="1"/>
<rect x="840.500" y="469.200" width="57.800" height="46.600" rx="7" fill="#fff" stroke="#000" stroke-width="1"/>
<path d="M838.700 461.700V487.500" stroke="#000" stroke-width="2.600"/>
<path d="M838.700 450.500V461.700" stroke="#000" stroke-width=".8"/>
<g fill="#fff" stroke="#000" stroke-width=".8">
 <path d="M826.500 459l3.500 3.500-3.500 3.500-3.500-3.500Z"/><path d="M850.700 459l3.500 3.500-3.500 3.500-3.500-3.500Z"/>
 <path d="M808.500 489.200l3.500 3.500-3.500 3.500-3.500-3.500Z"/><path d="M868.500 489.200l3.500 3.500-3.500 3.500-3.500-3.500Z"/>
</g>
<path d="M765.500 487.500H792 M811 487.500H871 M889 487.500H917 M935 487.500H981 M1000 487.500H1027 M1046 487.500H1059" stroke="#000" stroke-width="1" fill="none"/>
<path d="M765.500 524.500H783 M820 524.500H857 M893 524.500H912.500" stroke="#000" stroke-width="1" fill="none"/>
<path d="M765.500 453.300H1022.500 M912.500 453.300V470.500 M912.500 506V526.500 M1022.500 453.300V470 M1022.500 506.500V523 M967.500 450.500V487.500 M967.500 519.700V526.500H912.500" stroke="#000" stroke-width="1" fill="none"/>
<!-- stove -->
<rect x="915" y="456.700" width="93" height="63" fill="url(#gStove)"/>
<rect x="915" y="456.700" width="93" height="5" fill="#38362f"/>
<g fill="none" stroke="#000" stroke-width=".9">
 <circle cx="935.800" cy="476.700" r="13.500"/><circle cx="935.800" cy="476.700" r="3.300"/>
 <circle cx="993.300" cy="471.300" r="9"/><circle cx="993.300" cy="471.300" r="3.300"/>
 <circle cx="931.300" cy="505" r="9"/><circle cx="931.300" cy="505" r="5.500"/><circle cx="931.300" cy="505" r="2.800"/>
 <circle cx="961.700" cy="503" r="9"/><circle cx="961.700" cy="503" r="3.400"/>
 <circle cx="990.300" cy="501.300" r="12.300"/><circle cx="990.300" cy="501.300" r="3.400"/>
 <path d="M949.200 461.500A12.500 12.500 0 0 0 974.200 461.500 M915 461.500H1008"/>
</g>

<!-- ============ STAIR + LOFT DECK ============ -->
<g shape-rendering="crispEdges">
<rect x="1038" y="550" width="60" height="46" fill="#f1a775"/>
<path d="M1038 550.500H1098M1038 555.500H1098M1038 560.500H1098M1038 565.500H1098M1038 570.500H1098M1038 575.500H1098M1038 577.500H1098" stroke="#000" stroke-width="1" fill="none"/>
<rect x="1034.500" y="545.500" width="3" height="51" fill="#f3ab7a" stroke="#000" stroke-width="1"/>
<rect x="1098.500" y="545.500" width="3" height="51" fill="#f3ab7a" stroke="#000" stroke-width="1"/>
</g>
<g shape-rendering="crispEdges">
<rect x="1028" y="595" width="257" height="108" fill="#f1a775"/>
<rect x="1105" y="598" width="6" height="33" fill="#ecd18b"/>
<rect x="1105" y="630" width="6" height="1" fill="#000"/>
<rect x="1118" y="598" width="6" height="33" fill="#ecd18b"/>
<rect x="1118" y="630" width="6" height="1" fill="#000"/>
<rect x="1130" y="598" width="6" height="33" fill="#ecd18b"/>
<rect x="1130" y="630" width="6" height="1" fill="#000"/>
<rect x="1142" y="598" width="6" height="33" fill="#ecd18b"/>
<rect x="1142" y="630" width="6" height="1" fill="#000"/>
<rect x="1155" y="598" width="6" height="33" fill="#ecd18b"/>
<rect x="1155" y="630" width="6" height="1" fill="#000"/>
<rect x="1167" y="598" width="6" height="33" fill="#ecd18b"/>
<rect x="1167" y="630" width="6" height="1" fill="#000"/>
<rect x="1179" y="598" width="6" height="33" fill="#ecd18b"/>
<rect x="1179" y="630" width="6" height="1" fill="#000"/>
<rect x="1192" y="598" width="6" height="33" fill="#ecd18b"/>
<rect x="1192" y="630" width="6" height="1" fill="#000"/>
<rect x="1204" y="598" width="6" height="33" fill="#ecd18b"/>
<rect x="1204" y="630" width="6" height="1" fill="#000"/>
<rect x="1216" y="598" width="6" height="33" fill="#ecd18b"/>
<rect x="1216" y="630" width="6" height="1" fill="#000"/>
<rect x="1229" y="598" width="6" height="33" fill="#ecd18b"/>
<rect x="1229" y="630" width="6" height="1" fill="#000"/>
<rect x="1241" y="598" width="6" height="33" fill="#ecd18b"/>
<rect x="1241" y="630" width="6" height="1" fill="#000"/>
<rect x="1253" y="598" width="6" height="33" fill="#ecd18b"/>
<rect x="1253" y="630" width="6" height="1" fill="#000"/>
<rect x="1266" y="598" width="6" height="33" fill="#ecd18b"/>
<rect x="1266" y="630" width="6" height="1" fill="#000"/>
<path d="M1037.5 598V698 M1043.5 598V698 M1050.5 598V698 M1056.5 598V698 M1062.5 598V698 M1068.5 598V698 M1074.5 598V698 M1080.5 598V698 M1087.5 598V698 M1093.5 598V698 M1099.5 598V698 M1105.5 598V698 M1111.5 598V698 M1118.5 598V698 M1124.5 598V698 M1130.5 598V698 M1136.5 598V698 M1142.5 598V698 M1148.5 598V698 M1155.5 598V698 M1161.5 598V698 M1167.5 598V698 M1173.5 598V698 M1179.5 598V698 M1185.5 598V698 M1192.5 598V698 M1198.5 598V698 M1204.5 598V698 M1210.5 598V698 M1216.5 598V698 M1222.5 598V698 M1229.5 598V698 M1235.5 598V698 M1241.5 598V698 M1247.5 598V698 M1253.5 598V698 M1259.5 598V698 M1266.5 598V698 M1272.5 598V698 M1278.5 598V698" stroke="#000" stroke-width="1" fill="none"/>
</g>
<g shape-rendering="crispEdges" stroke="#000" stroke-width="1">
<rect x="1028.500" y="595.500" width="257" height="3" fill="#f3ab7a"/>
<rect x="1102" y="593.500" width="178" height="2" fill="#000" stroke="none"/>
<rect x="1028.500" y="697.500" width="257" height="5" fill="#f3ab7a"/>
<path d="M1034 700.500H1280" fill="none"/>
<rect x="1028.500" y="598.500" width="9" height="99" fill="#f1a775"/>
<path d="M1031.500 598V698M1033.500 598V698M1035.500 598V698" fill="none"/>
<rect x="1028.500" y="591.500" width="9" height="6" fill="#f3ab7a"/>
<path d="M1034.500 591.500V597.500" fill="none"/>
<rect x="1279.500" y="591.500" width="5" height="6" fill="#f3ab7a"/>
<rect x="1029.500" y="697.500" width="5" height="5" fill="#f3ab7a"/>
<rect x="1279.500" y="697.500" width="5" height="5" fill="#f3ab7a"/>
<rect x="1283.500" y="598.500" width="2" height="99" fill="#3a3028"/>
</g>

<!-- ============ REF ============ -->
<rect x="938.500" y="630.500" width="89.500" height="72.500" fill="#fff" stroke="#000" stroke-width="1" shape-rendering="crispEdges"/>
<text x="941.600" y="679" font-family="Liberation Sans, sans-serif" font-size="39" fill="#000" textLength="78.600" lengthAdjust="spacingAndGlyphs">REF</text>
<!-- jamb under ref -->
<rect x="938.800" y="703" width="9.500" height="10" fill="#fbe3a1" stroke="#000" stroke-width=".8"/>

<!-- ============ section / reference lines ============ -->
<path d="M938.700 428V712" stroke="#000" stroke-width="1"/>
<path d="M927 441L938.700 429.500L950 441" stroke="#000" stroke-width=".8" fill="none"/>
<path d="M757 577.300H1308" stroke="#000" stroke-width="1.200"/>
<path d="M759 577.300L794 566.700V577.300Z" fill="#000"/>
<path d="M1273 577.300H1308L1273 586.300Z" fill="#000"/>

<!-- ============ RIGHT DOOR ============ -->
<path d="M1309.500 492V594" stroke="#000" stroke-width="1" shape-rendering="crispEdges"/>
<path d="M1309.500 497A93.500 93.500 0 0 1 1403 590.500" fill="none" stroke="#000" stroke-width="1"/>
<rect x="1305" y="590.300" width="97.700" height="4" fill="#fff" stroke="#000" stroke-width="1"/>
<path d="M1284.500 488.500h5v4.500h14v4h6" fill="none" stroke="#000" stroke-width="1"/>
<rect x="1285" y="489" width="4.500" height="7" fill="#fff" stroke="#000" stroke-width=".8"/>
<rect x="1289" y="493.300" width="16" height="3.200" fill="#fff" stroke="#000" stroke-width=".8"/>
<rect x="1279" y="593" width="5" height="5" fill="#f3ab7a" stroke="#2a1a10" stroke-width=".8"/>
<rect x="1287" y="594.300" width="18" height="3" fill="#fff" stroke="#000" stroke-width=".8"/>

<!-- ============ SLIDING DOOR ============ -->
<rect x="586.700" y="712.300" width="361.700" height="26.200" fill="#000"/>
<rect x="586.700" y="712.300" width="3.600" height="26.200" fill="#fff" stroke="#000" stroke-width=".8"/>
<rect x="944.800" y="712.300" width="3.600" height="26.200" fill="#fff" stroke="#000" stroke-width=".8"/>
<path d="M588.500 714V737M946.600 714V737" stroke="#000" stroke-width=".8" stroke-dasharray="3 1.500"/>
<rect x="591.500" y="713.800" width="230.500" height="7.700" fill="#50504a"/>
<rect x="596.500" y="722.900" width="109" height="6.200" fill="#50504a"/>
<rect x="600" y="731.500" width="105.500" height="2.600" fill="#50504a"/>
<rect x="600" y="735.500" width="105.500" height="1.500" fill="#50504a"/>
<rect x="711.500" y="731.200" width="232" height="6" fill="#50504a"/>
<rect x="711.500" y="722.500" width="112" height="2" fill="#50504a"/>
<rect x="828.500" y="722.500" width="115" height="6.500" fill="#50504a"/>
<rect x="826" y="714.300" width="117.500" height="1.800" fill="#50504a"/>
<rect x="826" y="717.500" width="117.500" height="2.200" fill="#50504a"/>
<path d="M594.500 726l6-6.500 1.500 1.500-5 6.500z M594.500 738.500v6l5.500 4 1-1.500-4.500-3.500v-5z" fill="#8d897f" stroke="#000" stroke-width=".7"/>
<!-- green lines -->
<path d="M944.500 738.500V804" stroke="#0aa00a" stroke-width="1.200"/>
<path d="M745.300 704V712" stroke="#0aa00a" stroke-width="1.200"/>

<!-- ============ CHAIRS ============ -->
<polygon points="756.3,796.1 813.6,781.6 826.2,830.2 770.7,848.7" fill="#0d0a07"/>
<polygon points="761.8,801.5 811.3,788.5 820.7,826.6 773.4,841.9" fill="url(#gChair)"/>
<polygon points="761.3,797.5 809.8,785.0 810.0,787.7 762.5,800.0" fill="#e8904a"/>
<polygon points="758.6,799.2 760.2,798.8 772.9,844.2 771.3,844.7" fill="#d98a4a"/>
<polygon points="811.4,785.6 813.0,785.2 823.8,827.5 822.3,828.1" fill="#d98a4a"/>
<g fill="#f4d49c" stroke="#0d0a07" stroke-width="1.200"><ellipse cx="768.5" cy="805.0" rx="2.100" ry="1.900"/><ellipse cx="778.7" cy="804.3" rx="2.100" ry="1.900"/><ellipse cx="787.8" cy="799.8" rx="2.100" ry="1.900"/><ellipse cx="798.0" cy="799.0" rx="2.100" ry="1.900"/><ellipse cx="807.2" cy="794.5" rx="2.100" ry="1.900"/><ellipse cx="770.1" cy="815.0" rx="2.100" ry="1.900"/><ellipse cx="780.2" cy="814.2" rx="2.100" ry="1.900"/><ellipse cx="789.3" cy="809.5" rx="2.100" ry="1.900"/><ellipse cx="799.4" cy="808.6" rx="2.100" ry="1.900"/><ellipse cx="809.1" cy="803.9" rx="2.100" ry="1.900"/><ellipse cx="772.7" cy="824.7" rx="2.100" ry="1.900"/><ellipse cx="782.8" cy="823.7" rx="2.100" ry="1.900"/><ellipse cx="791.8" cy="819.0" rx="2.100" ry="1.900"/><ellipse cx="801.9" cy="818.0" rx="2.100" ry="1.900"/><ellipse cx="810.9" cy="813.2" rx="2.100" ry="1.900"/><ellipse cx="779.4" cy="832.6" rx="2.100" ry="1.900"/><ellipse cx="790.5" cy="831.2" rx="2.100" ry="1.900"/><ellipse cx="799.5" cy="826.3" rx="2.100" ry="1.900"/><ellipse cx="809.5" cy="825.2" rx="2.100" ry="1.900"/></g>
<polygon points="863.1,782.8 913.5,812.2 885.8,857.6 837.1,828.3" fill="#0d0a07"/>
<polygon points="863.3,790.3 906.8,815.7 885.0,850.7 843.5,825.8" fill="url(#gChair2)"/>
<polygon points="865.7,787.1 908.4,812.1 906.5,814.1 864.8,789.7" fill="#e8904a"/>
<polygon points="862.6,786.5 864.0,787.3 841.6,827.0 840.2,826.1" fill="#d98a4a"/>
<polygon points="909.1,813.6 910.5,814.4 886.3,853.8 884.9,853.0" fill="#d98a4a"/>
<g fill="#f4d49c" stroke="#0d0a07" stroke-width="1.200"><ellipse cx="865.5" cy="797.3" rx="2.100" ry="1.900"/><ellipse cx="873.1" cy="804.0" rx="2.100" ry="1.900"/><ellipse cx="882.5" cy="807.2" rx="2.100" ry="1.900"/><ellipse cx="890.0" cy="813.9" rx="2.100" ry="1.900"/><ellipse cx="899.5" cy="817.2" rx="2.100" ry="1.900"/><ellipse cx="859.7" cy="805.2" rx="2.100" ry="1.900"/><ellipse cx="867.2" cy="811.9" rx="2.100" ry="1.900"/><ellipse cx="876.6" cy="815.2" rx="2.100" ry="1.900"/><ellipse cx="884.0" cy="821.9" rx="2.100" ry="1.900"/><ellipse cx="893.9" cy="825.4" rx="2.100" ry="1.900"/><ellipse cx="854.8" cy="813.7" rx="2.100" ry="1.900"/><ellipse cx="862.2" cy="820.4" rx="2.100" ry="1.900"/><ellipse cx="871.6" cy="823.7" rx="2.100" ry="1.900"/><ellipse cx="879.0" cy="830.4" rx="2.100" ry="1.900"/><ellipse cx="888.4" cy="833.7" rx="2.100" ry="1.900"/><ellipse cx="853.9" cy="824.0" rx="2.100" ry="1.900"/><ellipse cx="862.1" cy="831.3" rx="2.100" ry="1.900"/><ellipse cx="871.5" cy="834.5" rx="2.100" ry="1.900"/><ellipse cx="878.8" cy="841.2" rx="2.100" ry="1.900"/></g>
</svg>


<span id="t0" class="t" style="left:924px;top:5.27px;font-size:15px;color:#262626;letter-spacing:-0.085px;">Autodesk Revit 2023 - Attempt3 - Floor Plan: Level 1</span>
<span id="t1" class="t" style="left:1549px;top:8.67px;font-size:15px;color:#262626;letter-spacing:-0.109px;">kavya.lalith</span>
<span id="t2" class="t" style="left:17px;top:42.17px;font-size:15px;color:#ffffff;letter-spacing:-0.057px;">File</span>
<span id="t3" class="t" style="left:71px;top:42.17px;font-size:15px;color:#262626;letter-spacing:-0.004px;">Architecture</span>
<span id="t4" class="t" style="left:175px;top:42.17px;font-size:15px;color:#262626;letter-spacing:-0.232px;">Structure</span>
<span id="t5" class="t" style="left:259px;top:42.17px;font-size:15px;color:#262626;letter-spacing:-0.301px;">Steel</span>
<span id="t6" class="t" style="left:317px;top:42.17px;font-size:15px;color:#262626;letter-spacing:-0.643px;">Precast</span>
<span id="t7" class="t" style="left:389px;top:42.17px;font-size:15px;color:#262626;letter-spacing:-0.753px;">Systems</span>
<span id="t8" class="t" style="left:467px;top:42.17px;font-size:15px;color:#262626;letter-spacing:-0.303px;">Insert</span>
<span id="t9" class="t" style="left:527px;top:42.17px;font-size:15px;color:#262626;letter-spacing:0.134px;">Annotate</span>
<span id="t10" class="t" style="left:613px;top:42.17px;font-size:15px;color:#262626;letter-spacing:-0.229px;">Analyze</span>
<span id="t11" class="t" style="left:689px;top:42.17px;font-size:15px;color:#262626;letter-spacing:-0.081px;">Massing &amp; Site</span>
<span id="t12" class="t" style="left:813px;top:42.17px;font-size:15px;color:#262626;letter-spacing:0.128px;">Collaborate</span>
<span id="t13" class="t" style="left:915px;top:42.17px;font-size:15px;color:#262626;letter-spacing:-0.083px;">View</span>
<span id="t14" class="t" style="left:971px;top:42.17px;font-size:15px;color:#262626;letter-spacing:-0.044px;">Manage</span>
<span id="t15" class="t" style="left:1049px;top:42.17px;font-size:15px;color:#262626;letter-spacing:0.049px;">Add-Ins</span>
<span id="t16" class="t" style="left:1125px;top:42.17px;font-size:15px;color:#262626;letter-spacing:0.562px;">Modify</span>
<span id="t17" class="t" style="left:8px;top:163.17px;font-size:15px;color:#262626;letter-spacing:-0.541px;">Select</span>
<span id="t18" class="t" style="left:79px;top:163.17px;font-size:15px;color:#262626;letter-spacing:-0.153px;">Properties</span>
<span id="t19" class="t" style="left:169px;top:163.17px;font-size:15px;color:#262626;letter-spacing:0.223px;">Clipboard</span>
<span id="t20" class="t" style="left:306px;top:163.17px;font-size:15px;color:#262626;letter-spacing:-0.123px;">Geometry</span>
<span id="t21" class="t" style="left:431px;top:163.17px;font-size:15px;color:#262626;letter-spacing:-0.123px;">Controls</span>
<span id="t22" class="t" style="left:619px;top:163.17px;font-size:15px;color:#262626;letter-spacing:0.562px;">Modify</span>
<span id="t23" class="t" style="left:816px;top:163.17px;font-size:15px;color:#262626;letter-spacing:-0.083px;">View</span>
<span id="t24" class="t" style="left:879px;top:163.17px;font-size:15px;color:#262626;letter-spacing:-0.393px;">Measure</span>
<span id="t25" class="t" style="left:973px;top:163.17px;font-size:15px;color:#262626;letter-spacing:-0.406px;">Create</span>
<span id="t26" class="t" style="left:13px;top:116.17px;font-size:15px;color:#262626;letter-spacing:0.562px;">Modify</span>
<span id="t27" class="t" style="left:169px;top:116.17px;font-size:15px;color:#a8a8a8;letter-spacing:-1.090px;">Paste</span>
<span id="t28" class="t" style="left:285px;top:73.17px;font-size:15px;color:#262626;letter-spacing:-0.286px;">Cope</span>
<span id="t29" class="t" style="left:286px;top:104.17px;font-size:15px;color:#262626;letter-spacing:-0.172px;">Cut</span>
<span id="t30" class="t" style="left:286px;top:135.17px;font-size:15px;color:#262626;letter-spacing:-0.510px;">Join</span>
<span id="t31" class="t" style="left:431px;top:116.17px;font-size:15px;color:#262626;letter-spacing:0.092px;">Activate</span>
<span id="t32" class="t" style="left:4.3px;top:364.37px;font-size:15px;color:#1e1e1e;letter-spacing:-0.519px;">Graphics</span>
<span id="t33" class="t" style="left:12.5px;top:387.47px;font-size:15px;color:#1e1e1e;letter-spacing:-0.438px;">View Scale</span>
<span id="t34" class="t" style="left:126.3px;top:387.47px;font-size:15px;color:#1e1e1e;letter-spacing:0.169px;">1/8" = 1'-0"</span>
<span id="t35" class="t" style="left:12.5px;top:411.47px;font-size:15px;color:#7d7d7d;letter-spacing:-0.425px;">Scale Value</span>
<span id="t36" class="t" style="left:105px;top:411.47px;font-size:15px;color:#7d7d7d;letter-spacing:-2.516px;">1:</span>
<span id="t37" class="t" style="left:121.7px;top:411.47px;font-size:15px;color:#7d7d7d;letter-spacing:-1.688px;">96</span>
<span id="t38" class="t" style="left:12.5px;top:435.47px;font-size:15px;color:#1e1e1e;letter-spacing:0.040px;">Display Model</span>
<span id="t39" class="t" style="left:121.7px;top:435.47px;font-size:15px;color:#1e1e1e;letter-spacing:-0.009px;">Normal</span>
<span id="t40" class="t" style="left:12.5px;top:459.47px;font-size:15px;color:#1e1e1e;letter-spacing:-0.154px;">Detail Level</span>
<span id="t41" class="t" style="left:121.7px;top:459.47px;font-size:15px;color:#1e1e1e;letter-spacing:-1.129px;">Fine</span>
<span id="t42" class="t" style="left:12.5px;top:483.47px;font-size:15px;color:#1e1e1e;letter-spacing:-0.126px;">Parts Visibility</span>
<span id="t43" class="t" style="left:121.7px;top:483.47px;font-size:15px;color:#1e1e1e;letter-spacing:-0.149px;">Show Original</span>
<span id="t44" class="t" style="left:12.5px;top:507.47px;font-size:15px;color:#1e1e1e;letter-spacing:-0.085px;">Visibility/Grap...</span>
<span id="t45" class="t" style="left:159.7px;top:508.27px;font-size:15px;color:#1e1e1e;letter-spacing:-0.710px;">Edit...</span>
<span id="t46" class="t" style="left:12.5px;top:531.47px;font-size:15px;color:#1e1e1e;letter-spacing:-0.350px;">Graphic Displ...</span>
<span id="t47" class="t" style="left:159.7px;top:532.27px;font-size:15px;color:#1e1e1e;letter-spacing:-0.710px;">Edit...</span>
<span id="t48" class="t" style="left:12.5px;top:555.47px;font-size:15px;color:#1e1e1e;letter-spacing:0.083px;">Orientation</span>
<span id="t49" class="t" style="left:121.7px;top:555.47px;font-size:15px;color:#1e1e1e;letter-spacing:-0.071px;">Project North</span>
<span id="t50" class="t" style="left:12.5px;top:579.47px;font-size:15px;color:#7d7d7d;letter-spacing:-0.343px;">Wall Join Disp...</span>
<span id="t51" class="t" style="left:121.7px;top:579.47px;font-size:15px;color:#7d7d7d;letter-spacing:-0.244px;">Clean all wall j...</span>
<span id="t52" class="t" style="left:12.5px;top:603.47px;font-size:15px;color:#1e1e1e;letter-spacing:-0.078px;">Discipline</span>
<span id="t53" class="t" style="left:121.5px;top:603.47px;font-size:15px;color:#1e1e1e;letter-spacing:-0.048px;">Architectural</span>
<span id="t54" class="t" style="left:12.5px;top:627.47px;font-size:15px;color:#1e1e1e;letter-spacing:-0.386px;">Show Hidden ...</span>
<span id="t55" class="t" style="left:121.5px;top:627.47px;font-size:15px;color:#1e1e1e;letter-spacing:-0.131px;">By Discipline</span>
<span id="t56" class="t" style="left:12.5px;top:651.47px;font-size:15px;color:#1e1e1e;letter-spacing:-0.561px;">Color Scheme ...</span>
<span id="t57" class="t" style="left:121.5px;top:651.47px;font-size:15px;color:#1e1e1e;letter-spacing:-0.251px;">Background</span>
<span id="t58" class="t" style="left:12.5px;top:675.47px;font-size:15px;color:#1e1e1e;letter-spacing:-0.386px;">Color Scheme</span>
<span id="t59" class="t" style="left:151.9px;top:676.27px;font-size:15px;color:#1e1e1e;letter-spacing:-0.158px;">&lt;none&gt;</span>
<span id="t60" class="t" style="left:12.5px;top:699.47px;font-size:15px;color:#1e1e1e;letter-spacing:-0.480px;">System Color ...</span>
<span id="t61" class="t" style="left:159.7px;top:700.27px;font-size:15px;color:#1e1e1e;letter-spacing:-0.710px;">Edit...</span>
<span id="t62" class="t" style="left:12.5px;top:723.47px;font-size:15px;color:#1e1e1e;letter-spacing:-0.319px;">Default Analys...</span>
<span id="t63" class="t" style="left:121.5px;top:723.47px;font-size:15px;color:#1e1e1e;letter-spacing:-0.320px;">None</span>
<span id="t64" class="t" style="left:12.5px;top:747.47px;font-size:15px;color:#1e1e1e;letter-spacing:-0.846px;">Sun Path</span>
<span id="t65" class="t" style="left:4.6px;top:772.37px;font-size:15px;color:#1e1e1e;letter-spacing:-0.290px;">Underlay</span>
<span id="t66" class="t" style="left:12.5px;top:795.47px;font-size:15px;color:#1e1e1e;letter-spacing:-0.790px;">Range: Base L...</span>
<span id="t67" class="t" style="left:121.5px;top:795.47px;font-size:15px;color:#1e1e1e;letter-spacing:-0.320px;">None</span>
<span id="t68" class="t" style="left:12.5px;top:819.47px;font-size:15px;color:#7d7d7d;letter-spacing:-0.554px;">Range: Top Le...</span>
<span id="t69" class="t" style="left:121.5px;top:819.47px;font-size:15px;color:#7d7d7d;letter-spacing:-0.110px;">Unbounded</span>
<span id="t70" class="t" style="left:12.5px;top:843.47px;font-size:15px;color:#7d7d7d;letter-spacing:-0.343px;">Underlay Orie...</span>
<span id="t71" class="t" style="left:121.5px;top:843.47px;font-size:15px;color:#7d7d7d;letter-spacing:-0.058px;">Look down</span>
<span id="t72" class="t" style="left:4.6px;top:868.37px;font-size:15px;color:#1e1e1e;letter-spacing:-0.689px;">Extents</span>
<span id="t73" class="t" style="left:12.5px;top:891.47px;font-size:15px;color:#1e1e1e;letter-spacing:-0.215px;">Crop View</span>
<span id="t74" class="t" style="left:12.5px;top:915.47px;font-size:15px;color:#1e1e1e;letter-spacing:-0.414px;">Crop Region V...</span>
<span id="t75" class="t" style="left:4.3px;top:223.17px;font-size:15px;color:#333;letter-spacing:-0.253px;">Properties</span>
<span id="t76" class="t" style="left:93.2px;top:279.87px;font-size:15px;color:#1e1e1e;letter-spacing:-0.375px;">Floor Plan</span>
<span id="t77" class="t" style="left:6.5px;top:337.97px;font-size:15px;color:#1e1e1e;letter-spacing:-0.365px;">Floor Plan: Level 1</span>
<span id="t78" class="t" style="left:203.3px;top:335.97px;font-size:15px;color:#1e1e1e;letter-spacing:-0.246px;">Edit Type</span>
<span id="t79" class="t" style="left:4.6px;top:943.17px;font-size:15px;color:#1a6fd6;font-weight:400;letter-spacing:-0.079px;text-decoration:underline;">Properties help</span>
<span id="t80" class="t" style="left:207.7px;top:946.47px;font-size:15px;color:#8b8b8b;letter-spacing:0.192px;">Apply</span>
<span id="t81" class="t" style="left:6.8px;top:975.67px;font-size:15px;color:#333;letter-spacing:-0.131px;">Properties</span>
<span id="t82" class="t" style="left:90.4px;top:975.67px;font-size:15px;color:#333;letter-spacing:-0.285px;">Project Browser...</span>
<span id="t83" class="t" style="left:2px;top:1009.22px;font-size:14.5px;color:#1e1e1e;letter-spacing:-0.141px;">Click to select, TAB for alternates, CTRL adds, SHIFT unselects.</span>
<span id="t84" class="t" style="left:1100px;top:1007.17px;font-size:15px;color:#8a8a8a;letter-spacing:0.495px;">Main Model</span>
<span id="t85" class="t" style="left:1005px;top:1009.16px;font-size:14px;color:#1e1e1e;letter-spacing:-0.688px;">:0</span>
<span id="t86" class="t" style="left:1832.5px;top:1009.16px;font-size:14px;color:#1e1e1e;letter-spacing:-1.188px;">:0</span>
<span id="t87" class="t" style="left:291px;top:978.15px;font-size:13px;color:#1e1e1e;letter-spacing:0.419px;">1/8" = 1'-0"</span>
<span id="t88" class="t" style="left:312px;top:223.17px;font-size:15px;color:#1e1e1e;font-weight:700;letter-spacing:-0.479px;">Level 1</span>
<span id="t89" class="t" style="left:472px;top:223.17px;font-size:15px;color:#333;letter-spacing:-0.401px;">{3D}</span>
<span id="t90" class="t" style="left:632px;top:223.17px;font-size:15px;color:#333;letter-spacing:-1.005px;">East</span>
<span id="t91" class="t" style="left:110px;top:1046.71px;font-size:18px;color:#2a2a2a;letter-spacing:0.217px;">Type here to search</span>
<span id="t92" class="t" style="left:1429px;top:1048.21px;font-size:18px;color:#fff;letter-spacing:-1.406px;">77°F</span>
<span id="t93" class="t" style="left:1474px;top:1048.21px;font-size:18px;color:#fff;letter-spacing:0.163px;">Mostly cloudy</span>
<span id="t94" class="t" style="left:1782px;top:1036.92px;font-size:14.5px;color:#fff;letter-spacing:-0.440px;">10:14 PM</span>
<span id="t95" class="t" style="left:1778px;top:1059.92px;font-size:14.5px;color:#fff;letter-spacing:0.436px;">7/18/2022</span>
</body></html>
